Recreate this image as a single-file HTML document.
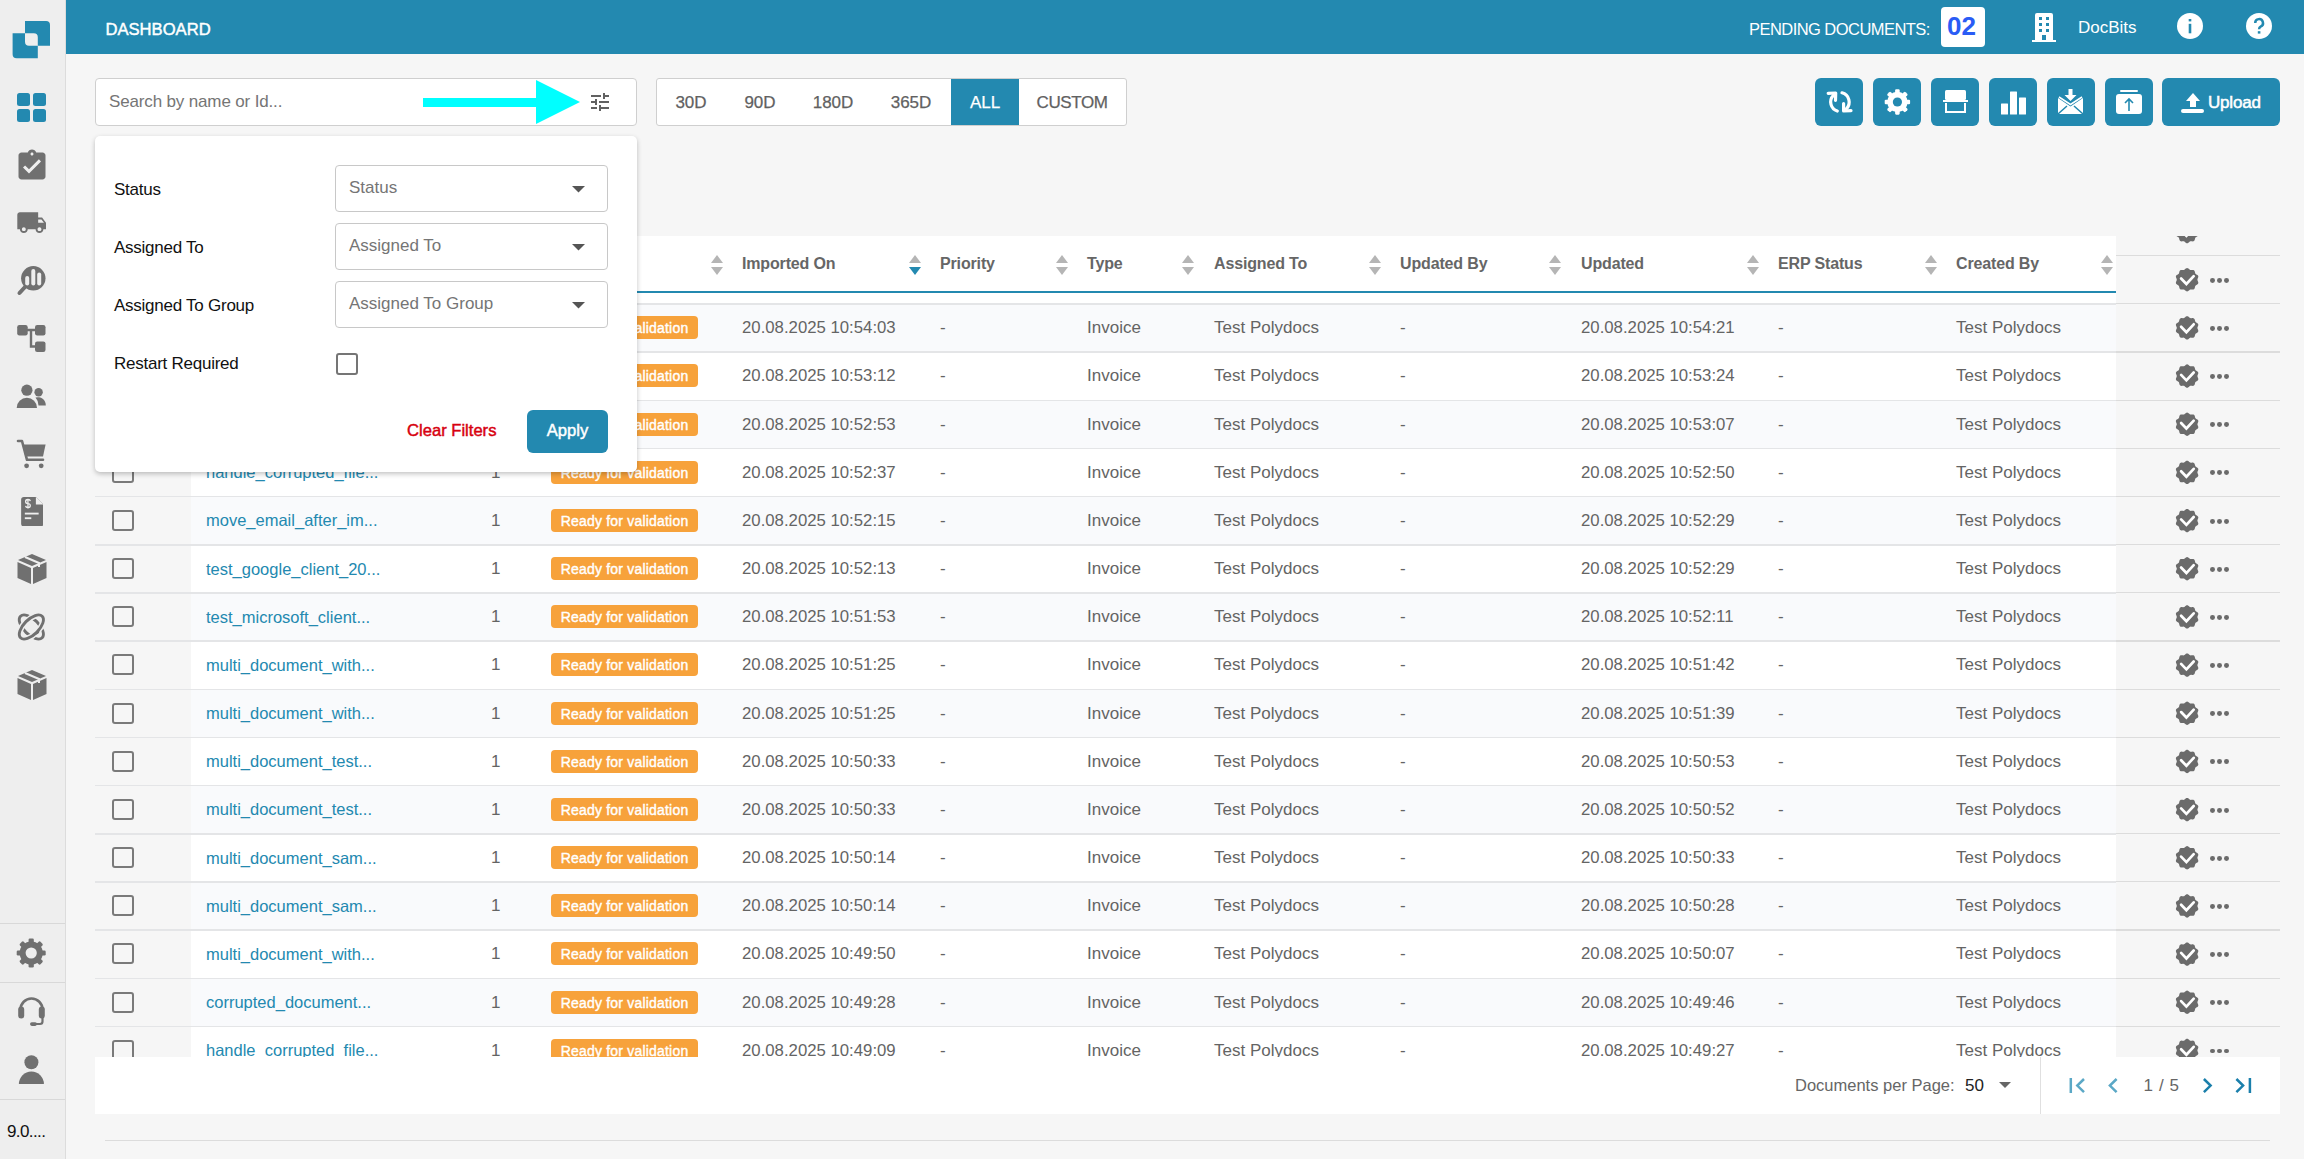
<!DOCTYPE html>
<html><head><meta charset="utf-8"><title>Dashboard</title>
<style>
*{box-sizing:border-box;margin:0;padding:0}
html,body{width:2304px;height:1159px;overflow:hidden;background:#f6f6f6;font-family:"Liberation Sans",sans-serif}
.a{position:absolute}
.t{position:absolute;white-space:nowrap}
</style></head><body>

<div class="a" style="left:0;top:0;width:66px;height:1159px;background:#eeeeee;border-right:1px solid #dcdcdc"></div>
<svg class="a" style="left:0;top:0;width:66px;height:66px" viewBox="0 0 66 66">
<path fill="#2389b0" d="M25 21 H46 a4 4 0 0 1 4 4 V45.8 H37.8 V37.3 a4 4 0 0 0 -4 -4 H25 Z"/>
<path fill="#2389b0" d="M12.6 33.3 H25 V41.8 a4 4 0 0 0 4 4 H37.8 V58.2 H16.6 a4 4 0 0 1 -4 -4 Z"/>
</svg>
<svg class="a" style="left:17px;top:93px;width:30px;height:30px" viewBox="0 0 30 30">
<rect x="0" y="0" width="13" height="13" rx="2.5" fill="#2389b0"/><rect x="16" y="0" width="13" height="13" rx="2.5" fill="#2389b0"/>
<rect x="0" y="16" width="13" height="13" rx="2.5" fill="#2389b0"/><rect x="16" y="16" width="13" height="13" rx="2.5" fill="#2389b0"/></svg>
<svg style="position:absolute;left:14px;top:148px;width:36px;height:36px" viewBox="0 0 24 24" ><path fill="#707070" d="M19 3h-4.18C14.4 1.84 13.3 1 12 1c-1.3 0-2.4.84-2.82 2H5c-1.1 0-2 .9-2 2v14c0 1.1.9 2 2 2h14c1.1 0 2-.9 2-2V5c0-1.1-.9-2-2-2zm-7 0c.55 0 1 .45 1 1s-.45 1-1 1-1-.45-1-1 .45-1 1-1zm-2 14l-4-4 1.41-1.41L10 14.17l6.59-6.59L18 9l-8 8z"/></svg>
<svg style="position:absolute;left:15.9px;top:206.8px;width:31.3px;height:31.3px" viewBox="0 0 24 24" ><path fill="#707070" d="M20 8h-3V4H3c-1.1 0-2 .9-2 2v11h2c0 1.66 1.34 3 3 3s3-1.34 3-3h6c0 1.66 1.34 3 3 3s3-1.34 3-3h2v-5l-3-4zM6 18.5c-.83 0-1.5-.67-1.5-1.5s.67-1.5 1.5-1.5 1.5.67 1.5 1.5-.67 1.5-1.5 1.5zm13.5-9l1.96 2.5H17V9.5h2.5zm-1.5 9c-.83 0-1.5-.67-1.5-1.5s.67-1.5 1.5-1.5 1.5.67 1.5 1.5-.67 1.5-1.5 1.5z"/></svg>
<svg class="a" style="left:0;top:250px;width:66px;height:60px" viewBox="0 250 66 60">
<circle cx="33.3" cy="278.3" r="12.2" fill="#707070"/>
<rect x="25.2" y="276" width="4" height="9.5" rx="2" fill="#eeeeee"/><rect x="31.3" y="269" width="4" height="16.5" rx="2" fill="#eeeeee"/><rect x="37.2" y="272.5" width="4" height="13" rx="2" fill="#eeeeee"/>
<path d="M25 287 L19.5 293" stroke="#707070" stroke-width="4" stroke-linecap="round"/></svg>
<svg class="a" style="left:0;top:310px;width:66px;height:50px" viewBox="0 310 66 50">
<rect x="17.2" y="325" width="10.5" height="10.5" rx="2.2" fill="#707070"/><rect x="35" y="325" width="10.5" height="10.5" rx="2.2" fill="#707070"/><rect x="35" y="341.4" width="10.5" height="10.5" rx="2.2" fill="#707070"/>
<path d="M27 330 H36 M31 330 V346.5 H36" stroke="#707070" stroke-width="2.4" fill="none"/></svg>
<svg class="a" style="left:0;top:370px;width:66px;height:50px" viewBox="0 370 66 50">
<circle cx="26.9" cy="390.2" r="5.6" fill="#707070"/><path d="M16.7 408 a10.15 10.15 0 0 1 20.3 0 Z" fill="#707070"/>
<circle cx="38.6" cy="392.3" r="4.2" fill="#707070"/><path d="M35.5 397.5 a8 8 0 0 1 10.3 7.9 H38.5 a12 12 0 0 0 -3 -7.9Z" fill="#707070"/></svg>
<svg class="a" style="left:0;top:430px;width:66px;height:45px" viewBox="0 430 66 45">
<path d="M18 441 H22 L27 459.8 H43" stroke="#707070" stroke-width="2.6" fill="none" stroke-linecap="round" stroke-linejoin="round"/>
<path d="M22.5 444.6 H45.6 L43 456.5 H25.4 Z" fill="#707070"/>
<circle cx="26.6" cy="465.8" r="2.4" fill="#707070"/><circle cx="41.2" cy="465.8" r="2.4" fill="#707070"/></svg>
<svg class="a" style="left:20.5px;top:496.7px;width:22.4px;height:29.5px" viewBox="0 0 24 32">
<path fill="#707070" d="M3 0 h13 l8 8 v21 a3 3 0 0 1 -3 3 h-18 a3 3 0 0 1 -3 -3 v-26 a3 3 0 0 1 3 -3z"/>
<path fill="#eeeeee" d="M16 0 v8 h8z"/>
<path d="M10 4.5 a2.6 2.2 0 1 0 -2.6 2.6 a2.6 2.2 0 1 1 -2.6 2.6 M7.4 2 V12.5" stroke="#eeeeee" stroke-width="1.4" fill="none"/>
<rect x="4" y="17" width="15" height="2" fill="#eeeeee"/><rect x="4" y="22" width="7" height="2" fill="#eeeeee"/></svg>
<svg class="a" style="left:16px;top:553px;width:32px;height:32px" viewBox="0 0 32 32">
<path fill="#707070" d="M16 1 L30 7 L16 13 L2 7 Z"/>
<path fill="#707070" d="M1.5 9 L15 15 V31 L1.5 25 Z"/>
<path fill="#707070" d="M30.5 9 L17 15 V31 L30.5 25 Z"/>
<path d="M9 4 L23 10 V14" stroke="#eeeeee" stroke-width="2" fill="none"/></svg>
<svg class="a" style="left:0;top:600px;width:66px;height:50px" viewBox="0 600 66 50">
<ellipse cx="31.35" cy="627" rx="15.3" ry="7.6" transform="rotate(45 31.35 627)" fill="none" stroke="#707070" stroke-width="2.9"/>
<ellipse cx="31.35" cy="627" rx="15.3" ry="7.6" transform="rotate(-45 31.35 627)" fill="none" stroke="#eeeeee" stroke-width="6"/>
<ellipse cx="31.35" cy="627" rx="15.3" ry="7.6" transform="rotate(-45 31.35 627)" fill="none" stroke="#707070" stroke-width="2.9"/>
<path d="M34 634 L38.5 629.5 a3 3 0 0 1 -2 5 Z" fill="#707070"/></svg>
<svg class="a" style="left:16px;top:669px;width:32px;height:32px" viewBox="0 0 32 32">
<path fill="#707070" d="M16 1 L30 7 L16 13 L2 7 Z"/>
<path fill="#707070" d="M1.5 9 L15 15 V31 L1.5 25 Z"/>
<path fill="#707070" d="M30.5 9 L17 15 V31 L30.5 25 Z"/>
<path d="M9 4 L23 10 V14" stroke="#eeeeee" stroke-width="2" fill="none"/></svg>
<div class="a" style="left:0;top:923px;width:65px;height:1px;background:#d8d8d8"></div>
<div class="a" style="left:0;top:982px;width:65px;height:1px;background:#d8d8d8"></div>
<div class="a" style="left:0;top:1099px;width:65px;height:1px;background:#d8d8d8"></div>
<svg class="a" style="left:0;top:0;width:2304px;height:1159px;overflow:visible;pointer-events:none"><circle cx="31.2" cy="953" r="11.60" fill="#707070"/><rect x="28.59" y="938.50" width="5.22" height="14.50" rx="1.30" fill="#707070" transform="rotate(0.0 31.2 953)"/><rect x="28.59" y="938.50" width="5.22" height="14.50" rx="1.30" fill="#707070" transform="rotate(45.0 31.2 953)"/><rect x="28.59" y="938.50" width="5.22" height="14.50" rx="1.30" fill="#707070" transform="rotate(90.0 31.2 953)"/><rect x="28.59" y="938.50" width="5.22" height="14.50" rx="1.30" fill="#707070" transform="rotate(135.0 31.2 953)"/><rect x="28.59" y="938.50" width="5.22" height="14.50" rx="1.30" fill="#707070" transform="rotate(180.0 31.2 953)"/><rect x="28.59" y="938.50" width="5.22" height="14.50" rx="1.30" fill="#707070" transform="rotate(225.0 31.2 953)"/><rect x="28.59" y="938.50" width="5.22" height="14.50" rx="1.30" fill="#707070" transform="rotate(270.0 31.2 953)"/><rect x="28.59" y="938.50" width="5.22" height="14.50" rx="1.30" fill="#707070" transform="rotate(315.0 31.2 953)"/><circle cx="31.2" cy="953" r="5.6" fill="#eeeeee"/></svg>
<svg class="a" style="left:0;top:990px;width:66px;height:45px" viewBox="0 990 66 45">
<path d="M20.5 1013 V1009.5 a11 11 0 0 1 22 0 V1013" stroke="#707070" stroke-width="2.6" fill="none"/>
<rect x="18.2" y="1006.5" width="6" height="12" rx="3" fill="#707070"/><rect x="38.8" y="1006.5" width="6" height="12" rx="3" fill="#707070"/>
<path d="M42.5 1017 V1021.5 a2.5 2.5 0 0 1 -2.5 2.5 H33" stroke="#707070" stroke-width="2.2" fill="none"/>
<rect x="30" y="1022.3" width="7" height="3.6" rx="1.8" fill="#707070"/></svg>
<svg class="a" style="left:0;top:1050px;width:66px;height:40px" viewBox="0 1050 66 40">
<circle cx="31.4" cy="1062.2" r="7" fill="#707070"/><path d="M18.9 1084 a12.5 12.5 0 0 1 25 0 Z" fill="#707070"/></svg>
<div class="t" style="left:7px;top:1122px;font-size:17px;color:#111;letter-spacing:-0.6px">9.0....</div>
<div class="a" style="left:66px;top:0;width:2238px;height:54px;background:#2389b0"></div>
<div class="t" style="left:105.5px;top:20px;font-size:16.6px;font-weight:400;color:#fff;-webkit-text-stroke:0.45px #fff;letter-spacing:0px">DASHBOARD</div>
<div class="t" style="left:1749px;top:20px;font-size:16.5px;color:#fff;letter-spacing:-0.55px">PENDING DOCUMENTS:</div>
<div class="a" style="left:1941px;top:7px;width:44px;height:40px;background:#fff;border-radius:4px"></div>
<div class="t" style="left:1947px;top:11px;font-size:26px;font-weight:700;color:#2a5cf5">02</div>
<svg class="a" style="left:2032px;top:13px;width:24px;height:29px" viewBox="0 0 24 29">
<path fill="#fff" d="M3 2 a2 2 0 0 1 2 -2 h14 a2 2 0 0 1 2 2 v25 h3 v2 h-24 v-2 h3z"/>
<g fill="#2389b0"><rect x="7" y="4" width="3" height="3"/><rect x="14" y="4" width="3" height="3"/>
<rect x="7" y="10" width="3" height="3"/><rect x="14" y="10" width="3" height="3"/>
<rect x="7" y="16" width="3" height="3"/><rect x="14" y="16" width="3" height="3"/>
<rect x="10" y="22" width="4" height="5"/></g></svg>
<div class="t" style="left:2078px;top:18px;font-size:17px;color:#fff">DocBits</div>
<svg class="a" style="left:2177px;top:12.6px;width:26px;height:26px" viewBox="0 0 26 26">
<circle cx="13" cy="13" r="13" fill="#fff"/><rect x="11.7" y="6" width="2.6" height="2.4" fill="#2389b0"/><rect x="11.7" y="10.8" width="2.6" height="9.5" fill="#2389b0"/></svg>
<svg class="a" style="left:2246px;top:12.6px;width:26px;height:26px" viewBox="0 0 26 26">
<circle cx="13" cy="13" r="13" fill="#fff"/>
<path d="M9.2 10 a3.9 3.9 0 1 1 5.4 3.6 c-1 .5 -1.5 1 -1.5 2.6" stroke="#2389b0" stroke-width="2.5" fill="none"/>
<rect x="11.8" y="18.2" width="2.6" height="2.4" fill="#2389b0"/></svg>
<div class="a" style="left:95px;top:78px;width:542px;height:48px;background:#fff;border:1px solid #cfcfcf;border-radius:4px"></div>
<div class="t" style="left:109px;top:92px;font-size:17px;color:#757575;letter-spacing:-0.15px">Search by name or Id...</div>
<svg class="a" style="left:420px;top:78px;width:165px;height:48px" viewBox="0 0 165 48">
<rect x="3" y="20" width="114" height="9" fill="#00ffff"/><path d="M116 2 L160 24 L116 46 Z" fill="#00ffff"/></svg>
<svg style="position:absolute;left:588px;top:90px;width:24px;height:24px" viewBox="0 0 24 24" ><path fill="#616161" d="M3 17v2h6v-2H3zM3 5v2h10V5H3zm10 16v-2h8v-2h-8v-2h-2v6h2zM7 9v2H3v2h4v2h2V9H7zm14 4v-2H11v2h10zm-6-4h2V7h4V5h-4V3h-2v6z"/></svg>
<div class="a" style="left:656px;top:78px;width:471px;height:48px;background:#fff;border:1px solid #cfcfcf;border-radius:3px"></div>
<div class="a" style="left:951px;top:79px;width:68px;height:46px;background:#2389b0"></div>
<div class="t" style="left:631px;width:120px;text-align:center;top:93px;font-size:17px;color:#616161;font-weight:400;-webkit-text-stroke:0.25px #616161;letter-spacing:0">30D</div>
<div class="t" style="left:700px;width:120px;text-align:center;top:93px;font-size:17px;color:#616161;font-weight:400;-webkit-text-stroke:0.25px #616161;letter-spacing:0">90D</div>
<div class="t" style="left:773px;width:120px;text-align:center;top:93px;font-size:17px;color:#616161;font-weight:400;-webkit-text-stroke:0.25px #616161;letter-spacing:0">180D</div>
<div class="t" style="left:851px;width:120px;text-align:center;top:93px;font-size:17px;color:#616161;font-weight:400;-webkit-text-stroke:0.25px #616161;letter-spacing:0">365D</div>
<div class="t" style="left:925px;width:120px;text-align:center;top:93px;font-size:17px;color:#fff;font-weight:400;-webkit-text-stroke:0.25px #fff;letter-spacing:0">ALL</div>
<div class="t" style="left:1012px;width:120px;text-align:center;top:93px;font-size:17px;color:#616161;font-weight:400;-webkit-text-stroke:0.25px #616161;letter-spacing:-0.4px">CUSTOM</div>
<div class="a" style="left:1815px;top:78px;width:48px;height:48px;background:#2389b0;border-radius:6px"></div>
<div class="a" style="left:1873px;top:78px;width:48px;height:48px;background:#2389b0;border-radius:6px"></div>
<div class="a" style="left:1931px;top:78px;width:48px;height:48px;background:#2389b0;border-radius:6px"></div>
<div class="a" style="left:1989px;top:78px;width:48px;height:48px;background:#2389b0;border-radius:6px"></div>
<div class="a" style="left:2047px;top:78px;width:48px;height:48px;background:#2389b0;border-radius:6px"></div>
<div class="a" style="left:2105px;top:78px;width:48px;height:48px;background:#2389b0;border-radius:6px"></div>
<div class="a" style="left:2162px;top:78px;width:118px;height:48px;background:#2389b0;border-radius:6px"></div>
<svg class="a" style="left:1820px;top:84px;width:40px;height:36px" viewBox="0 0 40 36">
<g stroke="#fff" stroke-width="3.2" fill="none" stroke-linecap="round" stroke-linejoin="round">
<path d="M13.2 11.5 A9.5 9.5 0 0 0 17.3 27"/><path d="M8.2 9.3 L15.7 9 L15.5 16.3"/>
<path d="M22 8.8 A9.5 9.5 0 0 1 26.3 24.8"/><path d="M23.6 19.6 L23.6 27 L31 26.6"/></g></svg>
<svg class="a" style="left:0;top:0;width:2304px;height:1159px;overflow:visible;pointer-events:none"><circle cx="1897.4" cy="102" r="10.16" fill="#fff"/><rect x="1895.11" y="89.30" width="4.57" height="12.70" rx="1.14" fill="#fff" transform="rotate(0.0 1897.4 102)"/><rect x="1895.11" y="89.30" width="4.57" height="12.70" rx="1.14" fill="#fff" transform="rotate(45.0 1897.4 102)"/><rect x="1895.11" y="89.30" width="4.57" height="12.70" rx="1.14" fill="#fff" transform="rotate(90.0 1897.4 102)"/><rect x="1895.11" y="89.30" width="4.57" height="12.70" rx="1.14" fill="#fff" transform="rotate(135.0 1897.4 102)"/><rect x="1895.11" y="89.30" width="4.57" height="12.70" rx="1.14" fill="#fff" transform="rotate(180.0 1897.4 102)"/><rect x="1895.11" y="89.30" width="4.57" height="12.70" rx="1.14" fill="#fff" transform="rotate(225.0 1897.4 102)"/><rect x="1895.11" y="89.30" width="4.57" height="12.70" rx="1.14" fill="#fff" transform="rotate(270.0 1897.4 102)"/><rect x="1895.11" y="89.30" width="4.57" height="12.70" rx="1.14" fill="#fff" transform="rotate(315.0 1897.4 102)"/><circle cx="1897.4" cy="102" r="4.6" fill="#2389b0"/></svg>
<svg class="a" style="left:1943px;top:89px;width:25px;height:24px" viewBox="0 0 25 24">
<rect x="2" y="1" width="21" height="10" rx="1.5" fill="#fff"/><rect x="0" y="11" width="25" height="2" fill="#fff"/>
<path d="M3 14 v9 h19 v-9" stroke="#fff" stroke-width="2" fill="none"/></svg>
<svg class="a" style="left:2000.5px;top:89.5px;width:25px;height:25px" viewBox="0 0 25 24">
<rect x="0" y="13" width="7" height="11" rx="0.5" fill="#fff"/><rect x="9" y="1" width="7" height="23" rx="0.5" fill="#fff"/><rect x="18" y="7" width="7" height="17" rx="0.5" fill="#fff"/></svg>
<svg class="a" style="left:2058px;top:89px;width:25px;height:26px" viewBox="0 0 25 26">
<path fill="#fff" d="M10.5 0 h4 v6 h4 l-6 6 l-6 -6 h4z"/>
<path fill="#fff" d="M0 9 l12.5 8.5 l12.5 -8.5 v16 h-25z"/>
<path d="M0 25 l9 -8 M25 25 l-9 -8" stroke="#2389b0" stroke-width="1.5"/>
<path d="M1 8 l11.5 7.5 l11.5 -7.5" stroke="#fff" stroke-width="1.5" fill="none"/></svg>
<svg class="a" style="left:2116px;top:90px;width:26px;height:24px" viewBox="0 0 26 24">
<rect x="4" y="0" width="18" height="2" rx="1" fill="#fff"/><rect x="0" y="4" width="26" height="20" rx="3" fill="#fff"/>
<path d="M13 21 v-12 M9 13 l4 -4 l4 4" stroke="#2389b0" stroke-width="1.6" fill="none"/></svg>
<svg class="a" style="left:2181px;top:93px;width:24px;height:20px" viewBox="0 0 24 20">
<path fill="#fff" d="M12 0 l7 8 h-4 v6 h-6 v-6 h-4z"/><rect x="0" y="16" width="23" height="4" rx="2" fill="#fff"/></svg>
<div class="t" style="left:2208px;top:93px;font-size:17px;font-weight:400;color:#fff;-webkit-text-stroke:0.5px #fff;letter-spacing:-0.2px">Upload</div>
<div class="a" style="left:95px;top:236px;width:2021px;height:55px;background:#fff"></div>
<div class="a" style="left:95px;top:291px;width:2021px;height:2.5px;background:#2389b0"></div>
<div class="a" style="left:95px;top:293px;width:2021px;height:10px;background:#fff"></div>
<div class="t" style="left:742px;top:255px;font-size:16px;font-weight:700;color:#666;letter-spacing:-0.15px">Imported On</div>
<div class="t" style="left:940px;top:255px;font-size:16px;font-weight:700;color:#666;letter-spacing:-0.15px">Priority</div>
<div class="t" style="left:1087px;top:255px;font-size:16px;font-weight:700;color:#666;letter-spacing:-0.15px">Type</div>
<div class="t" style="left:1214px;top:255px;font-size:16px;font-weight:700;color:#666;letter-spacing:-0.15px">Assigned To</div>
<div class="t" style="left:1400px;top:255px;font-size:16px;font-weight:700;color:#666;letter-spacing:-0.15px">Updated By</div>
<div class="t" style="left:1581px;top:255px;font-size:16px;font-weight:700;color:#666;letter-spacing:-0.15px">Updated</div>
<div class="t" style="left:1778px;top:255px;font-size:16px;font-weight:700;color:#666;letter-spacing:-0.15px">ERP Status</div>
<div class="t" style="left:1956px;top:255px;font-size:16px;font-weight:700;color:#666;letter-spacing:-0.15px">Created By</div>
<svg class="a" style="left:711px;top:255px;width:12px;height:21px" viewBox="0 0 12 21">
<path d="M6 0 L12 8 H0Z" fill="#b5b5b5"/><path d="M0 12 H12 L6 20Z" fill="#b5b5b5"/></svg>
<svg class="a" style="left:1056px;top:255px;width:12px;height:21px" viewBox="0 0 12 21">
<path d="M6 0 L12 8 H0Z" fill="#b5b5b5"/><path d="M0 12 H12 L6 20Z" fill="#b5b5b5"/></svg>
<svg class="a" style="left:1182px;top:255px;width:12px;height:21px" viewBox="0 0 12 21">
<path d="M6 0 L12 8 H0Z" fill="#b5b5b5"/><path d="M0 12 H12 L6 20Z" fill="#b5b5b5"/></svg>
<svg class="a" style="left:1369px;top:255px;width:12px;height:21px" viewBox="0 0 12 21">
<path d="M6 0 L12 8 H0Z" fill="#b5b5b5"/><path d="M0 12 H12 L6 20Z" fill="#b5b5b5"/></svg>
<svg class="a" style="left:1549px;top:255px;width:12px;height:21px" viewBox="0 0 12 21">
<path d="M6 0 L12 8 H0Z" fill="#b5b5b5"/><path d="M0 12 H12 L6 20Z" fill="#b5b5b5"/></svg>
<svg class="a" style="left:1747px;top:255px;width:12px;height:21px" viewBox="0 0 12 21">
<path d="M6 0 L12 8 H0Z" fill="#b5b5b5"/><path d="M0 12 H12 L6 20Z" fill="#b5b5b5"/></svg>
<svg class="a" style="left:1925px;top:255px;width:12px;height:21px" viewBox="0 0 12 21">
<path d="M6 0 L12 8 H0Z" fill="#b5b5b5"/><path d="M0 12 H12 L6 20Z" fill="#b5b5b5"/></svg>
<svg class="a" style="left:2101px;top:255px;width:12px;height:21px" viewBox="0 0 12 21">
<path d="M6 0 L12 8 H0Z" fill="#b5b5b5"/><path d="M0 12 H12 L6 20Z" fill="#b5b5b5"/></svg>
<svg class="a" style="left:909px;top:255px;width:12px;height:21px" viewBox="0 0 12 21">
<path d="M6 0 L12 8 H0Z" fill="#b5b5b5"/><path d="M0 12 H12 L6 20Z" fill="#2389b0"/></svg>
<div class="a" style="left:95px;top:303.2px;width:2021px;height:48.17px;background:#f9fafc;overflow:hidden">
<div class="a" style="left:0;top:0;width:2021px;height:1.5px;background:#e4e5e7"></div>
<div class="a" style="left:0;top:1.5px;width:96px;height:47px;background:#f6f6f6"></div>
<div class="a" style="left:17px;top:207px;"></div>
<div class="a" style="left:17px;top:14px;width:21.5px;height:21px;border:2px solid #7a7a7a;border-radius:3px;background:transparent"></div>
<div class="t" style="left:111px;top:15.5px;font-size:16.5px;color:#2389b0">document_one...</div>
<div class="t" style="left:396px;top:15px;font-size:17px;color:#646464">1</div>
<div class="a" style="left:456px;top:13px;width:147px;height:23px;background:#f7a23b;border-radius:4px"></div>
<div class="t" style="left:456px;width:147px;text-align:center;top:17px;font-size:14px;font-weight:400;color:#fff;-webkit-text-stroke:0.4px #fff;letter-spacing:0.2px">Ready for validation</div>
<div class="t" style="left:647px;top:15px;font-size:16.75px;color:#646464">20.08.2025 10:54:03</div>
<div class="t" style="left:845px;top:15px;font-size:17px;color:#646464">-</div>
<div class="t" style="left:992px;top:15px;font-size:17px;color:#646464">Invoice</div>
<div class="t" style="left:1119px;top:15px;font-size:17px;color:#646464">Test Polydocs</div>
<div class="t" style="left:1305px;top:15px;font-size:17px;color:#646464">-</div>
<div class="t" style="left:1486px;top:15px;font-size:16.75px;color:#646464">20.08.2025 10:54:21</div>
<div class="t" style="left:1683px;top:15px;font-size:17px;color:#646464">-</div>
<div class="t" style="left:1861px;top:15px;font-size:17px;color:#646464">Test Polydocs</div>
</div>
<div class="a" style="left:95px;top:351.37px;width:2021px;height:48.17px;background:#ffffff;overflow:hidden">
<div class="a" style="left:0;top:0;width:2021px;height:1.5px;background:#e4e5e7"></div>
<div class="a" style="left:0;top:1.5px;width:96px;height:47px;background:#f6f6f6"></div>
<div class="a" style="left:17px;top:207px;"></div>
<div class="a" style="left:17px;top:14px;width:21.5px;height:21px;border:2px solid #7a7a7a;border-radius:3px;background:transparent"></div>
<div class="t" style="left:111px;top:15.5px;font-size:16.5px;color:#2389b0">document_two...</div>
<div class="t" style="left:396px;top:15px;font-size:17px;color:#646464">1</div>
<div class="a" style="left:456px;top:13px;width:147px;height:23px;background:#f7a23b;border-radius:4px"></div>
<div class="t" style="left:456px;width:147px;text-align:center;top:17px;font-size:14px;font-weight:400;color:#fff;-webkit-text-stroke:0.4px #fff;letter-spacing:0.2px">Ready for validation</div>
<div class="t" style="left:647px;top:15px;font-size:16.75px;color:#646464">20.08.2025 10:53:12</div>
<div class="t" style="left:845px;top:15px;font-size:17px;color:#646464">-</div>
<div class="t" style="left:992px;top:15px;font-size:17px;color:#646464">Invoice</div>
<div class="t" style="left:1119px;top:15px;font-size:17px;color:#646464">Test Polydocs</div>
<div class="t" style="left:1305px;top:15px;font-size:17px;color:#646464">-</div>
<div class="t" style="left:1486px;top:15px;font-size:16.75px;color:#646464">20.08.2025 10:53:24</div>
<div class="t" style="left:1683px;top:15px;font-size:17px;color:#646464">-</div>
<div class="t" style="left:1861px;top:15px;font-size:17px;color:#646464">Test Polydocs</div>
</div>
<div class="a" style="left:95px;top:399.54px;width:2021px;height:48.17px;background:#f9fafc;overflow:hidden">
<div class="a" style="left:0;top:0;width:2021px;height:1.5px;background:#e4e5e7"></div>
<div class="a" style="left:0;top:1.5px;width:96px;height:47px;background:#f6f6f6"></div>
<div class="a" style="left:17px;top:207px;"></div>
<div class="a" style="left:17px;top:14px;width:21.5px;height:21px;border:2px solid #7a7a7a;border-radius:3px;background:transparent"></div>
<div class="t" style="left:111px;top:15.5px;font-size:16.5px;color:#2389b0">document_three...</div>
<div class="t" style="left:396px;top:15px;font-size:17px;color:#646464">1</div>
<div class="a" style="left:456px;top:13px;width:147px;height:23px;background:#f7a23b;border-radius:4px"></div>
<div class="t" style="left:456px;width:147px;text-align:center;top:17px;font-size:14px;font-weight:400;color:#fff;-webkit-text-stroke:0.4px #fff;letter-spacing:0.2px">Ready for validation</div>
<div class="t" style="left:647px;top:15px;font-size:16.75px;color:#646464">20.08.2025 10:52:53</div>
<div class="t" style="left:845px;top:15px;font-size:17px;color:#646464">-</div>
<div class="t" style="left:992px;top:15px;font-size:17px;color:#646464">Invoice</div>
<div class="t" style="left:1119px;top:15px;font-size:17px;color:#646464">Test Polydocs</div>
<div class="t" style="left:1305px;top:15px;font-size:17px;color:#646464">-</div>
<div class="t" style="left:1486px;top:15px;font-size:16.75px;color:#646464">20.08.2025 10:53:07</div>
<div class="t" style="left:1683px;top:15px;font-size:17px;color:#646464">-</div>
<div class="t" style="left:1861px;top:15px;font-size:17px;color:#646464">Test Polydocs</div>
</div>
<div class="a" style="left:95px;top:447.71px;width:2021px;height:48.17px;background:#ffffff;overflow:hidden">
<div class="a" style="left:0;top:0;width:2021px;height:1.5px;background:#e4e5e7"></div>
<div class="a" style="left:0;top:1.5px;width:96px;height:47px;background:#f6f6f6"></div>
<div class="a" style="left:17px;top:207px;"></div>
<div class="a" style="left:17px;top:14px;width:21.5px;height:21px;border:2px solid #7a7a7a;border-radius:3px;background:transparent"></div>
<div class="t" style="left:111px;top:15.5px;font-size:16.5px;color:#2389b0">handle_corrupted_file...</div>
<div class="t" style="left:396px;top:15px;font-size:17px;color:#646464">1</div>
<div class="a" style="left:456px;top:13px;width:147px;height:23px;background:#f7a23b;border-radius:4px"></div>
<div class="t" style="left:456px;width:147px;text-align:center;top:17px;font-size:14px;font-weight:400;color:#fff;-webkit-text-stroke:0.4px #fff;letter-spacing:0.2px">Ready for validation</div>
<div class="t" style="left:647px;top:15px;font-size:16.75px;color:#646464">20.08.2025 10:52:37</div>
<div class="t" style="left:845px;top:15px;font-size:17px;color:#646464">-</div>
<div class="t" style="left:992px;top:15px;font-size:17px;color:#646464">Invoice</div>
<div class="t" style="left:1119px;top:15px;font-size:17px;color:#646464">Test Polydocs</div>
<div class="t" style="left:1305px;top:15px;font-size:17px;color:#646464">-</div>
<div class="t" style="left:1486px;top:15px;font-size:16.75px;color:#646464">20.08.2025 10:52:50</div>
<div class="t" style="left:1683px;top:15px;font-size:17px;color:#646464">-</div>
<div class="t" style="left:1861px;top:15px;font-size:17px;color:#646464">Test Polydocs</div>
</div>
<div class="a" style="left:95px;top:495.88px;width:2021px;height:48.17px;background:#f9fafc;overflow:hidden">
<div class="a" style="left:0;top:0;width:2021px;height:1.5px;background:#e4e5e7"></div>
<div class="a" style="left:0;top:1.5px;width:96px;height:47px;background:#f6f6f6"></div>
<div class="a" style="left:17px;top:207px;"></div>
<div class="a" style="left:17px;top:14px;width:21.5px;height:21px;border:2px solid #7a7a7a;border-radius:3px;background:transparent"></div>
<div class="t" style="left:111px;top:15.5px;font-size:16.5px;color:#2389b0">move_email_after_im...</div>
<div class="t" style="left:396px;top:15px;font-size:17px;color:#646464">1</div>
<div class="a" style="left:456px;top:13px;width:147px;height:23px;background:#f7a23b;border-radius:4px"></div>
<div class="t" style="left:456px;width:147px;text-align:center;top:17px;font-size:14px;font-weight:400;color:#fff;-webkit-text-stroke:0.4px #fff;letter-spacing:0.2px">Ready for validation</div>
<div class="t" style="left:647px;top:15px;font-size:16.75px;color:#646464">20.08.2025 10:52:15</div>
<div class="t" style="left:845px;top:15px;font-size:17px;color:#646464">-</div>
<div class="t" style="left:992px;top:15px;font-size:17px;color:#646464">Invoice</div>
<div class="t" style="left:1119px;top:15px;font-size:17px;color:#646464">Test Polydocs</div>
<div class="t" style="left:1305px;top:15px;font-size:17px;color:#646464">-</div>
<div class="t" style="left:1486px;top:15px;font-size:16.75px;color:#646464">20.08.2025 10:52:29</div>
<div class="t" style="left:1683px;top:15px;font-size:17px;color:#646464">-</div>
<div class="t" style="left:1861px;top:15px;font-size:17px;color:#646464">Test Polydocs</div>
</div>
<div class="a" style="left:95px;top:544.05px;width:2021px;height:48.17px;background:#ffffff;overflow:hidden">
<div class="a" style="left:0;top:0;width:2021px;height:1.5px;background:#e4e5e7"></div>
<div class="a" style="left:0;top:1.5px;width:96px;height:47px;background:#f6f6f6"></div>
<div class="a" style="left:17px;top:207px;"></div>
<div class="a" style="left:17px;top:14px;width:21.5px;height:21px;border:2px solid #7a7a7a;border-radius:3px;background:transparent"></div>
<div class="t" style="left:111px;top:15.5px;font-size:16.5px;color:#2389b0">test_google_client_20...</div>
<div class="t" style="left:396px;top:15px;font-size:17px;color:#646464">1</div>
<div class="a" style="left:456px;top:13px;width:147px;height:23px;background:#f7a23b;border-radius:4px"></div>
<div class="t" style="left:456px;width:147px;text-align:center;top:17px;font-size:14px;font-weight:400;color:#fff;-webkit-text-stroke:0.4px #fff;letter-spacing:0.2px">Ready for validation</div>
<div class="t" style="left:647px;top:15px;font-size:16.75px;color:#646464">20.08.2025 10:52:13</div>
<div class="t" style="left:845px;top:15px;font-size:17px;color:#646464">-</div>
<div class="t" style="left:992px;top:15px;font-size:17px;color:#646464">Invoice</div>
<div class="t" style="left:1119px;top:15px;font-size:17px;color:#646464">Test Polydocs</div>
<div class="t" style="left:1305px;top:15px;font-size:17px;color:#646464">-</div>
<div class="t" style="left:1486px;top:15px;font-size:16.75px;color:#646464">20.08.2025 10:52:29</div>
<div class="t" style="left:1683px;top:15px;font-size:17px;color:#646464">-</div>
<div class="t" style="left:1861px;top:15px;font-size:17px;color:#646464">Test Polydocs</div>
</div>
<div class="a" style="left:95px;top:592.22px;width:2021px;height:48.17px;background:#f9fafc;overflow:hidden">
<div class="a" style="left:0;top:0;width:2021px;height:1.5px;background:#e4e5e7"></div>
<div class="a" style="left:0;top:1.5px;width:96px;height:47px;background:#f6f6f6"></div>
<div class="a" style="left:17px;top:207px;"></div>
<div class="a" style="left:17px;top:14px;width:21.5px;height:21px;border:2px solid #7a7a7a;border-radius:3px;background:transparent"></div>
<div class="t" style="left:111px;top:15.5px;font-size:16.5px;color:#2389b0">test_microsoft_client...</div>
<div class="t" style="left:396px;top:15px;font-size:17px;color:#646464">1</div>
<div class="a" style="left:456px;top:13px;width:147px;height:23px;background:#f7a23b;border-radius:4px"></div>
<div class="t" style="left:456px;width:147px;text-align:center;top:17px;font-size:14px;font-weight:400;color:#fff;-webkit-text-stroke:0.4px #fff;letter-spacing:0.2px">Ready for validation</div>
<div class="t" style="left:647px;top:15px;font-size:16.75px;color:#646464">20.08.2025 10:51:53</div>
<div class="t" style="left:845px;top:15px;font-size:17px;color:#646464">-</div>
<div class="t" style="left:992px;top:15px;font-size:17px;color:#646464">Invoice</div>
<div class="t" style="left:1119px;top:15px;font-size:17px;color:#646464">Test Polydocs</div>
<div class="t" style="left:1305px;top:15px;font-size:17px;color:#646464">-</div>
<div class="t" style="left:1486px;top:15px;font-size:16.75px;color:#646464">20.08.2025 10:52:11</div>
<div class="t" style="left:1683px;top:15px;font-size:17px;color:#646464">-</div>
<div class="t" style="left:1861px;top:15px;font-size:17px;color:#646464">Test Polydocs</div>
</div>
<div class="a" style="left:95px;top:640.39px;width:2021px;height:48.17px;background:#ffffff;overflow:hidden">
<div class="a" style="left:0;top:0;width:2021px;height:1.5px;background:#e4e5e7"></div>
<div class="a" style="left:0;top:1.5px;width:96px;height:47px;background:#f6f6f6"></div>
<div class="a" style="left:17px;top:207px;"></div>
<div class="a" style="left:17px;top:14px;width:21.5px;height:21px;border:2px solid #7a7a7a;border-radius:3px;background:transparent"></div>
<div class="t" style="left:111px;top:15.5px;font-size:16.5px;color:#2389b0">multi_document_with...</div>
<div class="t" style="left:396px;top:15px;font-size:17px;color:#646464">1</div>
<div class="a" style="left:456px;top:13px;width:147px;height:23px;background:#f7a23b;border-radius:4px"></div>
<div class="t" style="left:456px;width:147px;text-align:center;top:17px;font-size:14px;font-weight:400;color:#fff;-webkit-text-stroke:0.4px #fff;letter-spacing:0.2px">Ready for validation</div>
<div class="t" style="left:647px;top:15px;font-size:16.75px;color:#646464">20.08.2025 10:51:25</div>
<div class="t" style="left:845px;top:15px;font-size:17px;color:#646464">-</div>
<div class="t" style="left:992px;top:15px;font-size:17px;color:#646464">Invoice</div>
<div class="t" style="left:1119px;top:15px;font-size:17px;color:#646464">Test Polydocs</div>
<div class="t" style="left:1305px;top:15px;font-size:17px;color:#646464">-</div>
<div class="t" style="left:1486px;top:15px;font-size:16.75px;color:#646464">20.08.2025 10:51:42</div>
<div class="t" style="left:1683px;top:15px;font-size:17px;color:#646464">-</div>
<div class="t" style="left:1861px;top:15px;font-size:17px;color:#646464">Test Polydocs</div>
</div>
<div class="a" style="left:95px;top:688.56px;width:2021px;height:48.17px;background:#f9fafc;overflow:hidden">
<div class="a" style="left:0;top:0;width:2021px;height:1.5px;background:#e4e5e7"></div>
<div class="a" style="left:0;top:1.5px;width:96px;height:47px;background:#f6f6f6"></div>
<div class="a" style="left:17px;top:207px;"></div>
<div class="a" style="left:17px;top:14px;width:21.5px;height:21px;border:2px solid #7a7a7a;border-radius:3px;background:transparent"></div>
<div class="t" style="left:111px;top:15.5px;font-size:16.5px;color:#2389b0">multi_document_with...</div>
<div class="t" style="left:396px;top:15px;font-size:17px;color:#646464">1</div>
<div class="a" style="left:456px;top:13px;width:147px;height:23px;background:#f7a23b;border-radius:4px"></div>
<div class="t" style="left:456px;width:147px;text-align:center;top:17px;font-size:14px;font-weight:400;color:#fff;-webkit-text-stroke:0.4px #fff;letter-spacing:0.2px">Ready for validation</div>
<div class="t" style="left:647px;top:15px;font-size:16.75px;color:#646464">20.08.2025 10:51:25</div>
<div class="t" style="left:845px;top:15px;font-size:17px;color:#646464">-</div>
<div class="t" style="left:992px;top:15px;font-size:17px;color:#646464">Invoice</div>
<div class="t" style="left:1119px;top:15px;font-size:17px;color:#646464">Test Polydocs</div>
<div class="t" style="left:1305px;top:15px;font-size:17px;color:#646464">-</div>
<div class="t" style="left:1486px;top:15px;font-size:16.75px;color:#646464">20.08.2025 10:51:39</div>
<div class="t" style="left:1683px;top:15px;font-size:17px;color:#646464">-</div>
<div class="t" style="left:1861px;top:15px;font-size:17px;color:#646464">Test Polydocs</div>
</div>
<div class="a" style="left:95px;top:736.73px;width:2021px;height:48.17px;background:#ffffff;overflow:hidden">
<div class="a" style="left:0;top:0;width:2021px;height:1.5px;background:#e4e5e7"></div>
<div class="a" style="left:0;top:1.5px;width:96px;height:47px;background:#f6f6f6"></div>
<div class="a" style="left:17px;top:207px;"></div>
<div class="a" style="left:17px;top:14px;width:21.5px;height:21px;border:2px solid #7a7a7a;border-radius:3px;background:transparent"></div>
<div class="t" style="left:111px;top:15.5px;font-size:16.5px;color:#2389b0">multi_document_test...</div>
<div class="t" style="left:396px;top:15px;font-size:17px;color:#646464">1</div>
<div class="a" style="left:456px;top:13px;width:147px;height:23px;background:#f7a23b;border-radius:4px"></div>
<div class="t" style="left:456px;width:147px;text-align:center;top:17px;font-size:14px;font-weight:400;color:#fff;-webkit-text-stroke:0.4px #fff;letter-spacing:0.2px">Ready for validation</div>
<div class="t" style="left:647px;top:15px;font-size:16.75px;color:#646464">20.08.2025 10:50:33</div>
<div class="t" style="left:845px;top:15px;font-size:17px;color:#646464">-</div>
<div class="t" style="left:992px;top:15px;font-size:17px;color:#646464">Invoice</div>
<div class="t" style="left:1119px;top:15px;font-size:17px;color:#646464">Test Polydocs</div>
<div class="t" style="left:1305px;top:15px;font-size:17px;color:#646464">-</div>
<div class="t" style="left:1486px;top:15px;font-size:16.75px;color:#646464">20.08.2025 10:50:53</div>
<div class="t" style="left:1683px;top:15px;font-size:17px;color:#646464">-</div>
<div class="t" style="left:1861px;top:15px;font-size:17px;color:#646464">Test Polydocs</div>
</div>
<div class="a" style="left:95px;top:784.9px;width:2021px;height:48.17px;background:#f9fafc;overflow:hidden">
<div class="a" style="left:0;top:0;width:2021px;height:1.5px;background:#e4e5e7"></div>
<div class="a" style="left:0;top:1.5px;width:96px;height:47px;background:#f6f6f6"></div>
<div class="a" style="left:17px;top:207px;"></div>
<div class="a" style="left:17px;top:14px;width:21.5px;height:21px;border:2px solid #7a7a7a;border-radius:3px;background:transparent"></div>
<div class="t" style="left:111px;top:15.5px;font-size:16.5px;color:#2389b0">multi_document_test...</div>
<div class="t" style="left:396px;top:15px;font-size:17px;color:#646464">1</div>
<div class="a" style="left:456px;top:13px;width:147px;height:23px;background:#f7a23b;border-radius:4px"></div>
<div class="t" style="left:456px;width:147px;text-align:center;top:17px;font-size:14px;font-weight:400;color:#fff;-webkit-text-stroke:0.4px #fff;letter-spacing:0.2px">Ready for validation</div>
<div class="t" style="left:647px;top:15px;font-size:16.75px;color:#646464">20.08.2025 10:50:33</div>
<div class="t" style="left:845px;top:15px;font-size:17px;color:#646464">-</div>
<div class="t" style="left:992px;top:15px;font-size:17px;color:#646464">Invoice</div>
<div class="t" style="left:1119px;top:15px;font-size:17px;color:#646464">Test Polydocs</div>
<div class="t" style="left:1305px;top:15px;font-size:17px;color:#646464">-</div>
<div class="t" style="left:1486px;top:15px;font-size:16.75px;color:#646464">20.08.2025 10:50:52</div>
<div class="t" style="left:1683px;top:15px;font-size:17px;color:#646464">-</div>
<div class="t" style="left:1861px;top:15px;font-size:17px;color:#646464">Test Polydocs</div>
</div>
<div class="a" style="left:95px;top:833.07px;width:2021px;height:48.17px;background:#ffffff;overflow:hidden">
<div class="a" style="left:0;top:0;width:2021px;height:1.5px;background:#e4e5e7"></div>
<div class="a" style="left:0;top:1.5px;width:96px;height:47px;background:#f6f6f6"></div>
<div class="a" style="left:17px;top:207px;"></div>
<div class="a" style="left:17px;top:14px;width:21.5px;height:21px;border:2px solid #7a7a7a;border-radius:3px;background:transparent"></div>
<div class="t" style="left:111px;top:15.5px;font-size:16.5px;color:#2389b0">multi_document_sam...</div>
<div class="t" style="left:396px;top:15px;font-size:17px;color:#646464">1</div>
<div class="a" style="left:456px;top:13px;width:147px;height:23px;background:#f7a23b;border-radius:4px"></div>
<div class="t" style="left:456px;width:147px;text-align:center;top:17px;font-size:14px;font-weight:400;color:#fff;-webkit-text-stroke:0.4px #fff;letter-spacing:0.2px">Ready for validation</div>
<div class="t" style="left:647px;top:15px;font-size:16.75px;color:#646464">20.08.2025 10:50:14</div>
<div class="t" style="left:845px;top:15px;font-size:17px;color:#646464">-</div>
<div class="t" style="left:992px;top:15px;font-size:17px;color:#646464">Invoice</div>
<div class="t" style="left:1119px;top:15px;font-size:17px;color:#646464">Test Polydocs</div>
<div class="t" style="left:1305px;top:15px;font-size:17px;color:#646464">-</div>
<div class="t" style="left:1486px;top:15px;font-size:16.75px;color:#646464">20.08.2025 10:50:33</div>
<div class="t" style="left:1683px;top:15px;font-size:17px;color:#646464">-</div>
<div class="t" style="left:1861px;top:15px;font-size:17px;color:#646464">Test Polydocs</div>
</div>
<div class="a" style="left:95px;top:881.24px;width:2021px;height:48.17px;background:#f9fafc;overflow:hidden">
<div class="a" style="left:0;top:0;width:2021px;height:1.5px;background:#e4e5e7"></div>
<div class="a" style="left:0;top:1.5px;width:96px;height:47px;background:#f6f6f6"></div>
<div class="a" style="left:17px;top:207px;"></div>
<div class="a" style="left:17px;top:14px;width:21.5px;height:21px;border:2px solid #7a7a7a;border-radius:3px;background:transparent"></div>
<div class="t" style="left:111px;top:15.5px;font-size:16.5px;color:#2389b0">multi_document_sam...</div>
<div class="t" style="left:396px;top:15px;font-size:17px;color:#646464">1</div>
<div class="a" style="left:456px;top:13px;width:147px;height:23px;background:#f7a23b;border-radius:4px"></div>
<div class="t" style="left:456px;width:147px;text-align:center;top:17px;font-size:14px;font-weight:400;color:#fff;-webkit-text-stroke:0.4px #fff;letter-spacing:0.2px">Ready for validation</div>
<div class="t" style="left:647px;top:15px;font-size:16.75px;color:#646464">20.08.2025 10:50:14</div>
<div class="t" style="left:845px;top:15px;font-size:17px;color:#646464">-</div>
<div class="t" style="left:992px;top:15px;font-size:17px;color:#646464">Invoice</div>
<div class="t" style="left:1119px;top:15px;font-size:17px;color:#646464">Test Polydocs</div>
<div class="t" style="left:1305px;top:15px;font-size:17px;color:#646464">-</div>
<div class="t" style="left:1486px;top:15px;font-size:16.75px;color:#646464">20.08.2025 10:50:28</div>
<div class="t" style="left:1683px;top:15px;font-size:17px;color:#646464">-</div>
<div class="t" style="left:1861px;top:15px;font-size:17px;color:#646464">Test Polydocs</div>
</div>
<div class="a" style="left:95px;top:929.41px;width:2021px;height:48.17px;background:#ffffff;overflow:hidden">
<div class="a" style="left:0;top:0;width:2021px;height:1.5px;background:#e4e5e7"></div>
<div class="a" style="left:0;top:1.5px;width:96px;height:47px;background:#f6f6f6"></div>
<div class="a" style="left:17px;top:207px;"></div>
<div class="a" style="left:17px;top:14px;width:21.5px;height:21px;border:2px solid #7a7a7a;border-radius:3px;background:transparent"></div>
<div class="t" style="left:111px;top:15.5px;font-size:16.5px;color:#2389b0">multi_document_with...</div>
<div class="t" style="left:396px;top:15px;font-size:17px;color:#646464">1</div>
<div class="a" style="left:456px;top:13px;width:147px;height:23px;background:#f7a23b;border-radius:4px"></div>
<div class="t" style="left:456px;width:147px;text-align:center;top:17px;font-size:14px;font-weight:400;color:#fff;-webkit-text-stroke:0.4px #fff;letter-spacing:0.2px">Ready for validation</div>
<div class="t" style="left:647px;top:15px;font-size:16.75px;color:#646464">20.08.2025 10:49:50</div>
<div class="t" style="left:845px;top:15px;font-size:17px;color:#646464">-</div>
<div class="t" style="left:992px;top:15px;font-size:17px;color:#646464">Invoice</div>
<div class="t" style="left:1119px;top:15px;font-size:17px;color:#646464">Test Polydocs</div>
<div class="t" style="left:1305px;top:15px;font-size:17px;color:#646464">-</div>
<div class="t" style="left:1486px;top:15px;font-size:16.75px;color:#646464">20.08.2025 10:50:07</div>
<div class="t" style="left:1683px;top:15px;font-size:17px;color:#646464">-</div>
<div class="t" style="left:1861px;top:15px;font-size:17px;color:#646464">Test Polydocs</div>
</div>
<div class="a" style="left:95px;top:977.58px;width:2021px;height:48.17px;background:#f9fafc;overflow:hidden">
<div class="a" style="left:0;top:0;width:2021px;height:1.5px;background:#e4e5e7"></div>
<div class="a" style="left:0;top:1.5px;width:96px;height:47px;background:#f6f6f6"></div>
<div class="a" style="left:17px;top:207px;"></div>
<div class="a" style="left:17px;top:14px;width:21.5px;height:21px;border:2px solid #7a7a7a;border-radius:3px;background:transparent"></div>
<div class="t" style="left:111px;top:15.5px;font-size:16.5px;color:#2389b0">corrupted_document...</div>
<div class="t" style="left:396px;top:15px;font-size:17px;color:#646464">1</div>
<div class="a" style="left:456px;top:13px;width:147px;height:23px;background:#f7a23b;border-radius:4px"></div>
<div class="t" style="left:456px;width:147px;text-align:center;top:17px;font-size:14px;font-weight:400;color:#fff;-webkit-text-stroke:0.4px #fff;letter-spacing:0.2px">Ready for validation</div>
<div class="t" style="left:647px;top:15px;font-size:16.75px;color:#646464">20.08.2025 10:49:28</div>
<div class="t" style="left:845px;top:15px;font-size:17px;color:#646464">-</div>
<div class="t" style="left:992px;top:15px;font-size:17px;color:#646464">Invoice</div>
<div class="t" style="left:1119px;top:15px;font-size:17px;color:#646464">Test Polydocs</div>
<div class="t" style="left:1305px;top:15px;font-size:17px;color:#646464">-</div>
<div class="t" style="left:1486px;top:15px;font-size:16.75px;color:#646464">20.08.2025 10:49:46</div>
<div class="t" style="left:1683px;top:15px;font-size:17px;color:#646464">-</div>
<div class="t" style="left:1861px;top:15px;font-size:17px;color:#646464">Test Polydocs</div>
</div>
<div class="a" style="left:95px;top:1025.75px;width:2021px;height:31.25px;background:#ffffff;overflow:hidden">
<div class="a" style="left:0;top:0;width:2021px;height:1.5px;background:#e4e5e7"></div>
<div class="a" style="left:0;top:1.5px;width:96px;height:47px;background:#f6f6f6"></div>
<div class="a" style="left:17px;top:207px;"></div>
<div class="a" style="left:17px;top:14px;width:21.5px;height:21px;border:2px solid #7a7a7a;border-radius:3px;background:transparent"></div>
<div class="t" style="left:111px;top:15.5px;font-size:16.5px;color:#2389b0">handle_corrupted_file...</div>
<div class="t" style="left:396px;top:15px;font-size:17px;color:#646464">1</div>
<div class="a" style="left:456px;top:13px;width:147px;height:23px;background:#f7a23b;border-radius:4px"></div>
<div class="t" style="left:456px;width:147px;text-align:center;top:17px;font-size:14px;font-weight:400;color:#fff;-webkit-text-stroke:0.4px #fff;letter-spacing:0.2px">Ready for validation</div>
<div class="t" style="left:647px;top:15px;font-size:16.75px;color:#646464">20.08.2025 10:49:09</div>
<div class="t" style="left:845px;top:15px;font-size:17px;color:#646464">-</div>
<div class="t" style="left:992px;top:15px;font-size:17px;color:#646464">Invoice</div>
<div class="t" style="left:1119px;top:15px;font-size:17px;color:#646464">Test Polydocs</div>
<div class="t" style="left:1305px;top:15px;font-size:17px;color:#646464">-</div>
<div class="t" style="left:1486px;top:15px;font-size:16.75px;color:#646464">20.08.2025 10:49:27</div>
<div class="t" style="left:1683px;top:15px;font-size:17px;color:#646464">-</div>
<div class="t" style="left:1861px;top:15px;font-size:17px;color:#646464">Test Polydocs</div>
</div>
<div class="a" style="left:2116px;top:236px;width:164px;height:821px;background:#f6f6f6;overflow:hidden">
<svg class="a" style="left:0;top:0;width:200px;height:900px;overflow:visible"><polygon points="71.10,-16.14 71.71,-16.03 72.29,-15.73 72.82,-15.30 73.31,-14.86 73.79,-14.48 74.28,-14.24 74.82,-14.14 75.43,-14.17 76.09,-14.24 76.77,-14.27 77.42,-14.17 77.98,-13.91 78.40,-13.46 78.69,-12.87 78.88,-12.22 79.01,-11.57 79.18,-10.98 79.43,-10.49 79.82,-10.10 80.32,-9.77 80.90,-9.43 81.47,-9.06 81.94,-8.60 82.23,-8.06 82.31,-7.44 82.20,-6.80 81.96,-6.16 81.69,-5.55 81.48,-4.98 81.40,-4.44 81.48,-3.90 81.69,-3.33 81.96,-2.72 82.20,-2.08 82.31,-1.44 82.23,-0.82 81.94,-0.28 81.47,0.18 80.90,0.55 80.32,0.88 79.82,1.22 79.43,1.61 79.18,2.10 79.01,2.69 78.88,3.34 78.69,3.99 78.40,4.58 77.98,5.03 77.42,5.29 76.77,5.39 76.09,5.36 75.43,5.29 74.82,5.26 74.28,5.36 73.79,5.60 73.31,5.98 72.82,6.42 72.29,6.85 71.71,7.15 71.10,7.26 70.49,7.15 69.91,6.85 69.38,6.42 68.89,5.98 68.41,5.60 67.92,5.36 67.38,5.26 66.77,5.29 66.11,5.36 65.42,5.39 64.78,5.29 64.22,5.03 63.80,4.58 63.51,3.99 63.32,3.34 63.19,2.69 63.02,2.10 62.77,1.61 62.38,1.22 61.88,0.89 61.30,0.55 60.73,0.18 60.26,-0.28 59.97,-0.82 59.89,-1.44 60.00,-2.08 60.24,-2.72 60.51,-3.33 60.72,-3.90 60.80,-4.44 60.72,-4.98 60.51,-5.55 60.24,-6.16 60.00,-6.80 59.89,-7.44 59.97,-8.06 60.26,-8.60 60.73,-9.06 61.30,-9.43 61.88,-9.77 62.38,-10.10 62.77,-10.49 63.02,-10.98 63.19,-11.57 63.32,-12.22 63.51,-12.87 63.80,-13.46 64.22,-13.91 64.78,-14.17 65.42,-14.27 66.11,-14.24 66.77,-14.17 67.38,-14.14 67.92,-14.24 68.41,-14.48 68.89,-14.86 69.38,-15.30 69.91,-15.73 70.49,-16.03" fill="#6b6b6b"/><path d="M65.10 -5.64 L70.40 -0.14 L77.70 -8.04" stroke="#fff" stroke-width="2.7" fill="none" stroke-linecap="round"/></svg>
<div class="a" style="left:93.90px;top:-6.39px;width:4.9px;height:4.9px;border-radius:2.45px;background:#6b6b6b"></div>
<div class="a" style="left:101.15px;top:-6.39px;width:4.9px;height:4.9px;border-radius:2.45px;background:#6b6b6b"></div>
<div class="a" style="left:108.40px;top:-6.39px;width:4.9px;height:4.9px;border-radius:2.45px;background:#6b6b6b"></div>
<div class="a" style="left:0;top:19.03px;width:164px;height:1.2px;background:#dcdcdc"></div>
<svg class="a" style="left:0;top:0;width:200px;height:900px;overflow:visible"><polygon points="71.10,32.03 71.71,32.14 72.29,32.44 72.82,32.87 73.31,33.31 73.79,33.69 74.28,33.93 74.82,34.03 75.43,34.00 76.09,33.93 76.77,33.90 77.42,34.00 77.98,34.26 78.40,34.71 78.69,35.30 78.88,35.95 79.01,36.60 79.18,37.19 79.43,37.68 79.82,38.07 80.32,38.40 80.90,38.74 81.47,39.11 81.94,39.57 82.23,40.11 82.31,40.73 82.20,41.37 81.96,42.01 81.69,42.62 81.48,43.19 81.40,43.73 81.48,44.27 81.69,44.84 81.96,45.45 82.20,46.09 82.31,46.73 82.23,47.35 81.94,47.89 81.47,48.35 80.90,48.72 80.32,49.05 79.82,49.39 79.43,49.78 79.18,50.27 79.01,50.86 78.88,51.51 78.69,52.16 78.40,52.75 77.98,53.20 77.42,53.46 76.77,53.56 76.09,53.53 75.43,53.46 74.82,53.43 74.28,53.53 73.79,53.77 73.31,54.15 72.82,54.59 72.29,55.02 71.71,55.32 71.10,55.43 70.49,55.32 69.91,55.02 69.38,54.59 68.89,54.15 68.41,53.77 67.92,53.53 67.38,53.43 66.77,53.46 66.11,53.53 65.42,53.56 64.78,53.46 64.22,53.20 63.80,52.75 63.51,52.16 63.32,51.51 63.19,50.86 63.02,50.27 62.77,49.78 62.38,49.39 61.88,49.05 61.30,48.72 60.73,48.35 60.26,47.89 59.97,47.35 59.89,46.73 60.00,46.09 60.24,45.45 60.51,44.84 60.72,44.27 60.80,43.73 60.72,43.19 60.51,42.62 60.24,42.01 60.00,41.37 59.89,40.73 59.97,40.11 60.26,39.57 60.73,39.11 61.30,38.74 61.88,38.40 62.38,38.07 62.77,37.68 63.02,37.19 63.19,36.60 63.32,35.95 63.51,35.30 63.80,34.71 64.22,34.26 64.78,34.00 65.42,33.90 66.11,33.93 66.77,34.00 67.38,34.03 67.92,33.93 68.41,33.69 68.89,33.31 69.38,32.87 69.91,32.44 70.49,32.14" fill="#6b6b6b"/><path d="M65.10 42.53 L70.40 48.03 L77.70 40.13" stroke="#fff" stroke-width="2.7" fill="none" stroke-linecap="round"/></svg>
<div class="a" style="left:93.90px;top:41.78px;width:4.9px;height:4.9px;border-radius:2.45px;background:#6b6b6b"></div>
<div class="a" style="left:101.15px;top:41.78px;width:4.9px;height:4.9px;border-radius:2.45px;background:#6b6b6b"></div>
<div class="a" style="left:108.40px;top:41.78px;width:4.9px;height:4.9px;border-radius:2.45px;background:#6b6b6b"></div>
<div class="a" style="left:0;top:67.2px;width:164px;height:1.2px;background:#dcdcdc"></div>
<svg class="a" style="left:0;top:0;width:200px;height:900px;overflow:visible"><polygon points="71.10,80.20 71.71,80.31 72.29,80.61 72.82,81.04 73.31,81.48 73.79,81.86 74.28,82.10 74.82,82.20 75.43,82.17 76.09,82.10 76.77,82.07 77.42,82.17 77.98,82.43 78.40,82.88 78.69,83.47 78.88,84.12 79.01,84.77 79.18,85.36 79.43,85.85 79.82,86.24 80.32,86.58 80.90,86.91 81.47,87.28 81.94,87.74 82.23,88.28 82.31,88.90 82.20,89.54 81.96,90.18 81.69,90.79 81.48,91.36 81.40,91.90 81.48,92.44 81.69,93.01 81.96,93.62 82.20,94.26 82.31,94.90 82.23,95.52 81.94,96.06 81.47,96.52 80.90,96.89 80.32,97.23 79.82,97.56 79.43,97.95 79.18,98.44 79.01,99.03 78.88,99.68 78.69,100.33 78.40,100.92 77.98,101.37 77.42,101.63 76.77,101.73 76.09,101.70 75.43,101.63 74.82,101.60 74.28,101.70 73.79,101.94 73.31,102.32 72.82,102.76 72.29,103.19 71.71,103.49 71.10,103.60 70.49,103.49 69.91,103.19 69.38,102.76 68.89,102.32 68.41,101.94 67.92,101.70 67.38,101.60 66.77,101.63 66.11,101.70 65.42,101.73 64.78,101.63 64.22,101.37 63.80,100.92 63.51,100.33 63.32,99.68 63.19,99.03 63.02,98.44 62.77,97.95 62.38,97.56 61.88,97.23 61.30,96.89 60.73,96.52 60.26,96.06 59.97,95.52 59.89,94.90 60.00,94.26 60.24,93.62 60.51,93.01 60.72,92.44 60.80,91.90 60.72,91.36 60.51,90.79 60.24,90.18 60.00,89.54 59.89,88.90 59.97,88.28 60.26,87.74 60.73,87.28 61.30,86.91 61.88,86.58 62.38,86.24 62.77,85.85 63.02,85.36 63.19,84.77 63.32,84.12 63.51,83.47 63.80,82.88 64.22,82.43 64.78,82.17 65.42,82.07 66.11,82.10 66.77,82.17 67.38,82.20 67.92,82.10 68.41,81.86 68.89,81.48 69.38,81.04 69.91,80.61 70.49,80.31" fill="#6b6b6b"/><path d="M65.10 90.70 L70.40 96.20 L77.70 88.30" stroke="#fff" stroke-width="2.7" fill="none" stroke-linecap="round"/></svg>
<div class="a" style="left:93.90px;top:89.95px;width:4.9px;height:4.9px;border-radius:2.45px;background:#6b6b6b"></div>
<div class="a" style="left:101.15px;top:89.95px;width:4.9px;height:4.9px;border-radius:2.45px;background:#6b6b6b"></div>
<div class="a" style="left:108.40px;top:89.95px;width:4.9px;height:4.9px;border-radius:2.45px;background:#6b6b6b"></div>
<div class="a" style="left:0;top:115.37px;width:164px;height:1.2px;background:#dcdcdc"></div>
<svg class="a" style="left:0;top:0;width:200px;height:900px;overflow:visible"><polygon points="71.10,128.37 71.71,128.48 72.29,128.78 72.82,129.21 73.31,129.65 73.79,130.03 74.28,130.27 74.82,130.37 75.43,130.34 76.09,130.27 76.77,130.24 77.42,130.34 77.98,130.60 78.40,131.05 78.69,131.64 78.88,132.29 79.01,132.94 79.18,133.53 79.43,134.02 79.82,134.41 80.32,134.75 80.90,135.08 81.47,135.45 81.94,135.91 82.23,136.45 82.31,137.07 82.20,137.71 81.96,138.35 81.69,138.96 81.48,139.53 81.40,140.07 81.48,140.61 81.69,141.18 81.96,141.79 82.20,142.43 82.31,143.07 82.23,143.69 81.94,144.23 81.47,144.69 80.90,145.06 80.32,145.39 79.82,145.73 79.43,146.12 79.18,146.61 79.01,147.20 78.88,147.85 78.69,148.50 78.40,149.09 77.98,149.54 77.42,149.80 76.77,149.90 76.09,149.87 75.43,149.80 74.82,149.77 74.28,149.87 73.79,150.11 73.31,150.49 72.82,150.93 72.29,151.36 71.71,151.66 71.10,151.77 70.49,151.66 69.91,151.36 69.38,150.93 68.89,150.49 68.41,150.11 67.92,149.87 67.38,149.77 66.77,149.80 66.11,149.87 65.42,149.90 64.78,149.80 64.22,149.54 63.80,149.09 63.51,148.50 63.32,147.85 63.19,147.20 63.02,146.61 62.77,146.12 62.38,145.73 61.88,145.39 61.30,145.06 60.73,144.69 60.26,144.23 59.97,143.69 59.89,143.07 60.00,142.43 60.24,141.79 60.51,141.18 60.72,140.61 60.80,140.07 60.72,139.53 60.51,138.96 60.24,138.35 60.00,137.71 59.89,137.07 59.97,136.45 60.26,135.91 60.73,135.45 61.30,135.08 61.88,134.75 62.38,134.41 62.77,134.02 63.02,133.53 63.19,132.94 63.32,132.29 63.51,131.64 63.80,131.05 64.22,130.60 64.78,130.34 65.42,130.24 66.11,130.27 66.77,130.34 67.38,130.37 67.92,130.27 68.41,130.03 68.89,129.65 69.38,129.21 69.91,128.78 70.49,128.48" fill="#6b6b6b"/><path d="M65.10 138.87 L70.40 144.37 L77.70 136.47" stroke="#fff" stroke-width="2.7" fill="none" stroke-linecap="round"/></svg>
<div class="a" style="left:93.90px;top:138.12px;width:4.9px;height:4.9px;border-radius:2.45px;background:#6b6b6b"></div>
<div class="a" style="left:101.15px;top:138.12px;width:4.9px;height:4.9px;border-radius:2.45px;background:#6b6b6b"></div>
<div class="a" style="left:108.40px;top:138.12px;width:4.9px;height:4.9px;border-radius:2.45px;background:#6b6b6b"></div>
<div class="a" style="left:0;top:163.54px;width:164px;height:1.2px;background:#dcdcdc"></div>
<svg class="a" style="left:0;top:0;width:200px;height:900px;overflow:visible"><polygon points="71.10,176.54 71.71,176.65 72.29,176.95 72.82,177.38 73.31,177.82 73.79,178.20 74.28,178.44 74.82,178.54 75.43,178.51 76.09,178.44 76.77,178.41 77.42,178.51 77.98,178.77 78.40,179.22 78.69,179.81 78.88,180.46 79.01,181.11 79.18,181.70 79.43,182.19 79.82,182.58 80.32,182.92 80.90,183.25 81.47,183.62 81.94,184.08 82.23,184.62 82.31,185.24 82.20,185.88 81.96,186.52 81.69,187.13 81.48,187.70 81.40,188.24 81.48,188.78 81.69,189.35 81.96,189.96 82.20,190.60 82.31,191.24 82.23,191.86 81.94,192.40 81.47,192.86 80.90,193.23 80.32,193.56 79.82,193.90 79.43,194.29 79.18,194.78 79.01,195.37 78.88,196.02 78.69,196.67 78.40,197.26 77.98,197.71 77.42,197.97 76.77,198.07 76.09,198.04 75.43,197.97 74.82,197.94 74.28,198.04 73.79,198.28 73.31,198.66 72.82,199.10 72.29,199.53 71.71,199.83 71.10,199.94 70.49,199.83 69.91,199.53 69.38,199.10 68.89,198.66 68.41,198.28 67.92,198.04 67.38,197.94 66.77,197.97 66.11,198.04 65.42,198.07 64.78,197.97 64.22,197.71 63.80,197.26 63.51,196.67 63.32,196.02 63.19,195.37 63.02,194.78 62.77,194.29 62.38,193.90 61.88,193.56 61.30,193.23 60.73,192.86 60.26,192.40 59.97,191.86 59.89,191.24 60.00,190.60 60.24,189.96 60.51,189.35 60.72,188.78 60.80,188.24 60.72,187.70 60.51,187.13 60.24,186.52 60.00,185.88 59.89,185.24 59.97,184.62 60.26,184.08 60.73,183.62 61.30,183.25 61.88,182.92 62.38,182.58 62.77,182.19 63.02,181.70 63.19,181.11 63.32,180.46 63.51,179.81 63.80,179.22 64.22,178.77 64.78,178.51 65.42,178.41 66.11,178.44 66.77,178.51 67.38,178.54 67.92,178.44 68.41,178.20 68.89,177.82 69.38,177.38 69.91,176.95 70.49,176.65" fill="#6b6b6b"/><path d="M65.10 187.04 L70.40 192.54 L77.70 184.64" stroke="#fff" stroke-width="2.7" fill="none" stroke-linecap="round"/></svg>
<div class="a" style="left:93.90px;top:186.29px;width:4.9px;height:4.9px;border-radius:2.45px;background:#6b6b6b"></div>
<div class="a" style="left:101.15px;top:186.29px;width:4.9px;height:4.9px;border-radius:2.45px;background:#6b6b6b"></div>
<div class="a" style="left:108.40px;top:186.29px;width:4.9px;height:4.9px;border-radius:2.45px;background:#6b6b6b"></div>
<div class="a" style="left:0;top:211.71px;width:164px;height:1.2px;background:#dcdcdc"></div>
<svg class="a" style="left:0;top:0;width:200px;height:900px;overflow:visible"><polygon points="71.10,224.71 71.71,224.82 72.29,225.12 72.82,225.55 73.31,225.99 73.79,226.37 74.28,226.61 74.82,226.71 75.43,226.68 76.09,226.61 76.77,226.58 77.42,226.68 77.98,226.94 78.40,227.39 78.69,227.98 78.88,228.63 79.01,229.28 79.18,229.87 79.43,230.36 79.82,230.75 80.32,231.09 80.90,231.42 81.47,231.79 81.94,232.25 82.23,232.79 82.31,233.41 82.20,234.05 81.96,234.69 81.69,235.30 81.48,235.87 81.40,236.41 81.48,236.95 81.69,237.52 81.96,238.13 82.20,238.77 82.31,239.41 82.23,240.03 81.94,240.57 81.47,241.03 80.90,241.40 80.32,241.73 79.82,242.07 79.43,242.46 79.18,242.95 79.01,243.54 78.88,244.19 78.69,244.84 78.40,245.43 77.98,245.88 77.42,246.14 76.77,246.24 76.09,246.21 75.43,246.14 74.82,246.11 74.28,246.21 73.79,246.45 73.31,246.83 72.82,247.27 72.29,247.70 71.71,248.00 71.10,248.11 70.49,248.00 69.91,247.70 69.38,247.27 68.89,246.83 68.41,246.45 67.92,246.21 67.38,246.11 66.77,246.14 66.11,246.21 65.42,246.24 64.78,246.14 64.22,245.88 63.80,245.43 63.51,244.84 63.32,244.19 63.19,243.54 63.02,242.95 62.77,242.46 62.38,242.07 61.88,241.74 61.30,241.40 60.73,241.03 60.26,240.57 59.97,240.03 59.89,239.41 60.00,238.77 60.24,238.13 60.51,237.52 60.72,236.95 60.80,236.41 60.72,235.87 60.51,235.30 60.24,234.69 60.00,234.05 59.89,233.41 59.97,232.79 60.26,232.25 60.73,231.79 61.30,231.42 61.88,231.09 62.38,230.75 62.77,230.36 63.02,229.87 63.19,229.28 63.32,228.63 63.51,227.98 63.80,227.39 64.22,226.94 64.78,226.68 65.42,226.58 66.11,226.61 66.77,226.68 67.38,226.71 67.92,226.61 68.41,226.37 68.89,225.99 69.38,225.55 69.91,225.12 70.49,224.82" fill="#6b6b6b"/><path d="M65.10 235.21 L70.40 240.71 L77.70 232.81" stroke="#fff" stroke-width="2.7" fill="none" stroke-linecap="round"/></svg>
<div class="a" style="left:93.90px;top:234.46px;width:4.9px;height:4.9px;border-radius:2.45px;background:#6b6b6b"></div>
<div class="a" style="left:101.15px;top:234.46px;width:4.9px;height:4.9px;border-radius:2.45px;background:#6b6b6b"></div>
<div class="a" style="left:108.40px;top:234.46px;width:4.9px;height:4.9px;border-radius:2.45px;background:#6b6b6b"></div>
<div class="a" style="left:0;top:259.88px;width:164px;height:1.2px;background:#dcdcdc"></div>
<svg class="a" style="left:0;top:0;width:200px;height:900px;overflow:visible"><polygon points="71.10,272.88 71.71,272.99 72.29,273.29 72.82,273.72 73.31,274.16 73.79,274.54 74.28,274.78 74.82,274.88 75.43,274.85 76.09,274.78 76.77,274.75 77.42,274.85 77.98,275.11 78.40,275.56 78.69,276.15 78.88,276.80 79.01,277.45 79.18,278.04 79.43,278.53 79.82,278.92 80.32,279.25 80.90,279.59 81.47,279.96 81.94,280.42 82.23,280.96 82.31,281.58 82.20,282.22 81.96,282.86 81.69,283.47 81.48,284.04 81.40,284.58 81.48,285.12 81.69,285.69 81.96,286.30 82.20,286.94 82.31,287.58 82.23,288.20 81.94,288.74 81.47,289.20 80.90,289.57 80.32,289.90 79.82,290.24 79.43,290.63 79.18,291.12 79.01,291.71 78.88,292.36 78.69,293.01 78.40,293.60 77.98,294.05 77.42,294.31 76.77,294.41 76.09,294.38 75.43,294.31 74.82,294.28 74.28,294.38 73.79,294.62 73.31,295.00 72.82,295.44 72.29,295.87 71.71,296.17 71.10,296.28 70.49,296.17 69.91,295.87 69.38,295.44 68.89,295.00 68.41,294.62 67.92,294.38 67.38,294.28 66.77,294.31 66.11,294.38 65.42,294.41 64.78,294.31 64.22,294.05 63.80,293.60 63.51,293.01 63.32,292.36 63.19,291.71 63.02,291.12 62.77,290.63 62.38,290.24 61.88,289.90 61.30,289.57 60.73,289.20 60.26,288.74 59.97,288.20 59.89,287.58 60.00,286.94 60.24,286.30 60.51,285.69 60.72,285.12 60.80,284.58 60.72,284.04 60.51,283.47 60.24,282.86 60.00,282.22 59.89,281.58 59.97,280.96 60.26,280.42 60.73,279.96 61.30,279.59 61.88,279.25 62.38,278.92 62.77,278.53 63.02,278.04 63.19,277.45 63.32,276.80 63.51,276.15 63.80,275.56 64.22,275.11 64.78,274.85 65.42,274.75 66.11,274.78 66.77,274.85 67.38,274.88 67.92,274.78 68.41,274.54 68.89,274.16 69.38,273.72 69.91,273.29 70.49,272.99" fill="#6b6b6b"/><path d="M65.10 283.38 L70.40 288.88 L77.70 280.98" stroke="#fff" stroke-width="2.7" fill="none" stroke-linecap="round"/></svg>
<div class="a" style="left:93.90px;top:282.63px;width:4.9px;height:4.9px;border-radius:2.45px;background:#6b6b6b"></div>
<div class="a" style="left:101.15px;top:282.63px;width:4.9px;height:4.9px;border-radius:2.45px;background:#6b6b6b"></div>
<div class="a" style="left:108.40px;top:282.63px;width:4.9px;height:4.9px;border-radius:2.45px;background:#6b6b6b"></div>
<div class="a" style="left:0;top:308.05px;width:164px;height:1.2px;background:#dcdcdc"></div>
<svg class="a" style="left:0;top:0;width:200px;height:900px;overflow:visible"><polygon points="71.10,321.05 71.71,321.16 72.29,321.46 72.82,321.89 73.31,322.33 73.79,322.71 74.28,322.95 74.82,323.05 75.43,323.02 76.09,322.95 76.77,322.92 77.42,323.02 77.98,323.28 78.40,323.73 78.69,324.32 78.88,324.97 79.01,325.62 79.18,326.21 79.43,326.70 79.82,327.09 80.32,327.43 80.90,327.76 81.47,328.13 81.94,328.59 82.23,329.13 82.31,329.75 82.20,330.39 81.96,331.03 81.69,331.64 81.48,332.21 81.40,332.75 81.48,333.29 81.69,333.86 81.96,334.47 82.20,335.11 82.31,335.75 82.23,336.37 81.94,336.91 81.47,337.37 80.90,337.74 80.32,338.07 79.82,338.41 79.43,338.80 79.18,339.29 79.01,339.88 78.88,340.53 78.69,341.18 78.40,341.77 77.98,342.22 77.42,342.48 76.77,342.58 76.09,342.55 75.43,342.48 74.82,342.45 74.28,342.55 73.79,342.79 73.31,343.17 72.82,343.61 72.29,344.04 71.71,344.34 71.10,344.45 70.49,344.34 69.91,344.04 69.38,343.61 68.89,343.17 68.41,342.79 67.92,342.55 67.38,342.45 66.77,342.48 66.11,342.55 65.42,342.58 64.78,342.48 64.22,342.22 63.80,341.77 63.51,341.18 63.32,340.53 63.19,339.88 63.02,339.29 62.77,338.80 62.38,338.41 61.88,338.07 61.30,337.74 60.73,337.37 60.26,336.91 59.97,336.37 59.89,335.75 60.00,335.11 60.24,334.47 60.51,333.86 60.72,333.29 60.80,332.75 60.72,332.21 60.51,331.64 60.24,331.03 60.00,330.39 59.89,329.75 59.97,329.13 60.26,328.59 60.73,328.13 61.30,327.76 61.88,327.43 62.38,327.09 62.77,326.70 63.02,326.21 63.19,325.62 63.32,324.97 63.51,324.32 63.80,323.73 64.22,323.28 64.78,323.02 65.42,322.92 66.11,322.95 66.77,323.02 67.38,323.05 67.92,322.95 68.41,322.71 68.89,322.33 69.38,321.89 69.91,321.46 70.49,321.16" fill="#6b6b6b"/><path d="M65.10 331.55 L70.40 337.05 L77.70 329.15" stroke="#fff" stroke-width="2.7" fill="none" stroke-linecap="round"/></svg>
<div class="a" style="left:93.90px;top:330.80px;width:4.9px;height:4.9px;border-radius:2.45px;background:#6b6b6b"></div>
<div class="a" style="left:101.15px;top:330.80px;width:4.9px;height:4.9px;border-radius:2.45px;background:#6b6b6b"></div>
<div class="a" style="left:108.40px;top:330.80px;width:4.9px;height:4.9px;border-radius:2.45px;background:#6b6b6b"></div>
<div class="a" style="left:0;top:356.22px;width:164px;height:1.2px;background:#dcdcdc"></div>
<svg class="a" style="left:0;top:0;width:200px;height:900px;overflow:visible"><polygon points="71.10,369.22 71.71,369.33 72.29,369.63 72.82,370.06 73.31,370.50 73.79,370.88 74.28,371.12 74.82,371.22 75.43,371.19 76.09,371.12 76.77,371.09 77.42,371.19 77.98,371.45 78.40,371.90 78.69,372.49 78.88,373.14 79.01,373.79 79.18,374.38 79.43,374.87 79.82,375.26 80.32,375.59 80.90,375.93 81.47,376.30 81.94,376.76 82.23,377.30 82.31,377.92 82.20,378.56 81.96,379.20 81.69,379.81 81.48,380.38 81.40,380.92 81.48,381.46 81.69,382.03 81.96,382.64 82.20,383.28 82.31,383.92 82.23,384.54 81.94,385.08 81.47,385.54 80.90,385.91 80.32,386.24 79.82,386.58 79.43,386.97 79.18,387.46 79.01,388.05 78.88,388.70 78.69,389.35 78.40,389.94 77.98,390.39 77.42,390.65 76.77,390.75 76.09,390.72 75.43,390.65 74.82,390.62 74.28,390.72 73.79,390.96 73.31,391.34 72.82,391.78 72.29,392.21 71.71,392.51 71.10,392.62 70.49,392.51 69.91,392.21 69.38,391.78 68.89,391.34 68.41,390.96 67.92,390.72 67.38,390.62 66.77,390.65 66.11,390.72 65.42,390.75 64.78,390.65 64.22,390.39 63.80,389.94 63.51,389.35 63.32,388.70 63.19,388.05 63.02,387.46 62.77,386.97 62.38,386.58 61.88,386.24 61.30,385.91 60.73,385.54 60.26,385.08 59.97,384.54 59.89,383.92 60.00,383.28 60.24,382.64 60.51,382.03 60.72,381.46 60.80,380.92 60.72,380.38 60.51,379.81 60.24,379.20 60.00,378.56 59.89,377.92 59.97,377.30 60.26,376.76 60.73,376.30 61.30,375.93 61.88,375.59 62.38,375.26 62.77,374.87 63.02,374.38 63.19,373.79 63.32,373.14 63.51,372.49 63.80,371.90 64.22,371.45 64.78,371.19 65.42,371.09 66.11,371.12 66.77,371.19 67.38,371.22 67.92,371.12 68.41,370.88 68.89,370.50 69.38,370.06 69.91,369.63 70.49,369.33" fill="#6b6b6b"/><path d="M65.10 379.72 L70.40 385.22 L77.70 377.32" stroke="#fff" stroke-width="2.7" fill="none" stroke-linecap="round"/></svg>
<div class="a" style="left:93.90px;top:378.97px;width:4.9px;height:4.9px;border-radius:2.45px;background:#6b6b6b"></div>
<div class="a" style="left:101.15px;top:378.97px;width:4.9px;height:4.9px;border-radius:2.45px;background:#6b6b6b"></div>
<div class="a" style="left:108.40px;top:378.97px;width:4.9px;height:4.9px;border-radius:2.45px;background:#6b6b6b"></div>
<div class="a" style="left:0;top:404.39px;width:164px;height:1.2px;background:#dcdcdc"></div>
<svg class="a" style="left:0;top:0;width:200px;height:900px;overflow:visible"><polygon points="71.10,417.39 71.71,417.50 72.29,417.80 72.82,418.23 73.31,418.67 73.79,419.05 74.28,419.29 74.82,419.39 75.43,419.36 76.09,419.29 76.77,419.26 77.42,419.36 77.98,419.62 78.40,420.07 78.69,420.66 78.88,421.31 79.01,421.96 79.18,422.55 79.43,423.04 79.82,423.43 80.32,423.76 80.90,424.10 81.47,424.47 81.94,424.93 82.23,425.47 82.31,426.09 82.20,426.73 81.96,427.37 81.69,427.98 81.48,428.55 81.40,429.09 81.48,429.63 81.69,430.20 81.96,430.81 82.20,431.45 82.31,432.09 82.23,432.71 81.94,433.25 81.47,433.71 80.90,434.08 80.32,434.41 79.82,434.75 79.43,435.14 79.18,435.63 79.01,436.22 78.88,436.87 78.69,437.52 78.40,438.11 77.98,438.56 77.42,438.82 76.77,438.92 76.09,438.89 75.43,438.82 74.82,438.79 74.28,438.89 73.79,439.13 73.31,439.51 72.82,439.95 72.29,440.38 71.71,440.68 71.10,440.79 70.49,440.68 69.91,440.38 69.38,439.95 68.89,439.51 68.41,439.13 67.92,438.89 67.38,438.79 66.77,438.82 66.11,438.89 65.42,438.92 64.78,438.82 64.22,438.56 63.80,438.11 63.51,437.52 63.32,436.87 63.19,436.22 63.02,435.63 62.77,435.14 62.38,434.75 61.88,434.41 61.30,434.08 60.73,433.71 60.26,433.25 59.97,432.71 59.89,432.09 60.00,431.45 60.24,430.81 60.51,430.20 60.72,429.63 60.80,429.09 60.72,428.55 60.51,427.98 60.24,427.37 60.00,426.73 59.89,426.09 59.97,425.47 60.26,424.93 60.73,424.47 61.30,424.10 61.88,423.76 62.38,423.43 62.77,423.04 63.02,422.55 63.19,421.96 63.32,421.31 63.51,420.66 63.80,420.07 64.22,419.62 64.78,419.36 65.42,419.26 66.11,419.29 66.77,419.36 67.38,419.39 67.92,419.29 68.41,419.05 68.89,418.67 69.38,418.23 69.91,417.80 70.49,417.50" fill="#6b6b6b"/><path d="M65.10 427.89 L70.40 433.39 L77.70 425.49" stroke="#fff" stroke-width="2.7" fill="none" stroke-linecap="round"/></svg>
<div class="a" style="left:93.90px;top:427.14px;width:4.9px;height:4.9px;border-radius:2.45px;background:#6b6b6b"></div>
<div class="a" style="left:101.15px;top:427.14px;width:4.9px;height:4.9px;border-radius:2.45px;background:#6b6b6b"></div>
<div class="a" style="left:108.40px;top:427.14px;width:4.9px;height:4.9px;border-radius:2.45px;background:#6b6b6b"></div>
<div class="a" style="left:0;top:452.56px;width:164px;height:1.2px;background:#dcdcdc"></div>
<svg class="a" style="left:0;top:0;width:200px;height:900px;overflow:visible"><polygon points="71.10,465.56 71.71,465.67 72.29,465.97 72.82,466.40 73.31,466.84 73.79,467.22 74.28,467.46 74.82,467.56 75.43,467.53 76.09,467.46 76.77,467.43 77.42,467.53 77.98,467.79 78.40,468.24 78.69,468.83 78.88,469.48 79.01,470.13 79.18,470.72 79.43,471.21 79.82,471.60 80.32,471.94 80.90,472.27 81.47,472.64 81.94,473.10 82.23,473.64 82.31,474.26 82.20,474.90 81.96,475.54 81.69,476.15 81.48,476.72 81.40,477.26 81.48,477.80 81.69,478.37 81.96,478.98 82.20,479.62 82.31,480.26 82.23,480.88 81.94,481.42 81.47,481.88 80.90,482.25 80.32,482.58 79.82,482.92 79.43,483.31 79.18,483.80 79.01,484.39 78.88,485.04 78.69,485.69 78.40,486.28 77.98,486.73 77.42,486.99 76.77,487.09 76.09,487.06 75.43,486.99 74.82,486.96 74.28,487.06 73.79,487.30 73.31,487.68 72.82,488.12 72.29,488.55 71.71,488.85 71.10,488.96 70.49,488.85 69.91,488.55 69.38,488.12 68.89,487.68 68.41,487.30 67.92,487.06 67.38,486.96 66.77,486.99 66.11,487.06 65.42,487.09 64.78,486.99 64.22,486.73 63.80,486.28 63.51,485.69 63.32,485.04 63.19,484.39 63.02,483.80 62.77,483.31 62.38,482.92 61.88,482.58 61.30,482.25 60.73,481.88 60.26,481.42 59.97,480.88 59.89,480.26 60.00,479.62 60.24,478.98 60.51,478.37 60.72,477.80 60.80,477.26 60.72,476.72 60.51,476.15 60.24,475.54 60.00,474.90 59.89,474.26 59.97,473.64 60.26,473.10 60.73,472.64 61.30,472.27 61.88,471.94 62.38,471.60 62.77,471.21 63.02,470.72 63.19,470.13 63.32,469.48 63.51,468.83 63.80,468.24 64.22,467.79 64.78,467.53 65.42,467.43 66.11,467.46 66.77,467.53 67.38,467.56 67.92,467.46 68.41,467.22 68.89,466.84 69.38,466.40 69.91,465.97 70.49,465.67" fill="#6b6b6b"/><path d="M65.10 476.06 L70.40 481.56 L77.70 473.66" stroke="#fff" stroke-width="2.7" fill="none" stroke-linecap="round"/></svg>
<div class="a" style="left:93.90px;top:475.31px;width:4.9px;height:4.9px;border-radius:2.45px;background:#6b6b6b"></div>
<div class="a" style="left:101.15px;top:475.31px;width:4.9px;height:4.9px;border-radius:2.45px;background:#6b6b6b"></div>
<div class="a" style="left:108.40px;top:475.31px;width:4.9px;height:4.9px;border-radius:2.45px;background:#6b6b6b"></div>
<div class="a" style="left:0;top:500.73px;width:164px;height:1.2px;background:#dcdcdc"></div>
<svg class="a" style="left:0;top:0;width:200px;height:900px;overflow:visible"><polygon points="71.10,513.73 71.71,513.84 72.29,514.14 72.82,514.57 73.31,515.01 73.79,515.39 74.28,515.63 74.82,515.73 75.43,515.70 76.09,515.63 76.77,515.60 77.42,515.70 77.98,515.96 78.40,516.41 78.69,517.00 78.88,517.65 79.01,518.30 79.18,518.89 79.43,519.38 79.82,519.77 80.32,520.10 80.90,520.44 81.47,520.81 81.94,521.27 82.23,521.81 82.31,522.43 82.20,523.07 81.96,523.71 81.69,524.32 81.48,524.89 81.40,525.43 81.48,525.97 81.69,526.54 81.96,527.15 82.20,527.79 82.31,528.43 82.23,529.05 81.94,529.59 81.47,530.05 80.90,530.42 80.32,530.75 79.82,531.09 79.43,531.48 79.18,531.97 79.01,532.56 78.88,533.21 78.69,533.86 78.40,534.45 77.98,534.90 77.42,535.16 76.77,535.26 76.09,535.23 75.43,535.16 74.82,535.13 74.28,535.23 73.79,535.47 73.31,535.85 72.82,536.29 72.29,536.72 71.71,537.02 71.10,537.13 70.49,537.02 69.91,536.72 69.38,536.29 68.89,535.85 68.41,535.47 67.92,535.23 67.38,535.13 66.77,535.16 66.11,535.23 65.42,535.26 64.78,535.16 64.22,534.90 63.80,534.45 63.51,533.86 63.32,533.21 63.19,532.56 63.02,531.97 62.77,531.48 62.38,531.09 61.88,530.75 61.30,530.42 60.73,530.05 60.26,529.59 59.97,529.05 59.89,528.43 60.00,527.79 60.24,527.15 60.51,526.54 60.72,525.97 60.80,525.43 60.72,524.89 60.51,524.32 60.24,523.71 60.00,523.07 59.89,522.43 59.97,521.81 60.26,521.27 60.73,520.81 61.30,520.44 61.88,520.10 62.38,519.77 62.77,519.38 63.02,518.89 63.19,518.30 63.32,517.65 63.51,517.00 63.80,516.41 64.22,515.96 64.78,515.70 65.42,515.60 66.11,515.63 66.77,515.70 67.38,515.73 67.92,515.63 68.41,515.39 68.89,515.01 69.38,514.57 69.91,514.14 70.49,513.84" fill="#6b6b6b"/><path d="M65.10 524.23 L70.40 529.73 L77.70 521.83" stroke="#fff" stroke-width="2.7" fill="none" stroke-linecap="round"/></svg>
<div class="a" style="left:93.90px;top:523.48px;width:4.9px;height:4.9px;border-radius:2.45px;background:#6b6b6b"></div>
<div class="a" style="left:101.15px;top:523.48px;width:4.9px;height:4.9px;border-radius:2.45px;background:#6b6b6b"></div>
<div class="a" style="left:108.40px;top:523.48px;width:4.9px;height:4.9px;border-radius:2.45px;background:#6b6b6b"></div>
<div class="a" style="left:0;top:548.9px;width:164px;height:1.2px;background:#dcdcdc"></div>
<svg class="a" style="left:0;top:0;width:200px;height:900px;overflow:visible"><polygon points="71.10,561.90 71.71,562.01 72.29,562.31 72.82,562.74 73.31,563.18 73.79,563.56 74.28,563.80 74.82,563.90 75.43,563.87 76.09,563.80 76.77,563.77 77.42,563.87 77.98,564.13 78.40,564.58 78.69,565.17 78.88,565.82 79.01,566.47 79.18,567.06 79.43,567.55 79.82,567.94 80.32,568.27 80.90,568.61 81.47,568.98 81.94,569.44 82.23,569.98 82.31,570.60 82.20,571.24 81.96,571.88 81.69,572.49 81.48,573.06 81.40,573.60 81.48,574.14 81.69,574.71 81.96,575.32 82.20,575.96 82.31,576.60 82.23,577.22 81.94,577.76 81.47,578.22 80.90,578.59 80.32,578.93 79.82,579.26 79.43,579.65 79.18,580.14 79.01,580.73 78.88,581.38 78.69,582.03 78.40,582.62 77.98,583.07 77.42,583.33 76.77,583.43 76.09,583.40 75.43,583.33 74.82,583.30 74.28,583.40 73.79,583.64 73.31,584.02 72.82,584.46 72.29,584.89 71.71,585.19 71.10,585.30 70.49,585.19 69.91,584.89 69.38,584.46 68.89,584.02 68.41,583.64 67.92,583.40 67.38,583.30 66.77,583.33 66.11,583.40 65.42,583.43 64.78,583.33 64.22,583.07 63.80,582.62 63.51,582.03 63.32,581.38 63.19,580.73 63.02,580.14 62.77,579.65 62.38,579.26 61.88,578.93 61.30,578.59 60.73,578.22 60.26,577.76 59.97,577.22 59.89,576.60 60.00,575.96 60.24,575.32 60.51,574.71 60.72,574.14 60.80,573.60 60.72,573.06 60.51,572.49 60.24,571.88 60.00,571.24 59.89,570.60 59.97,569.98 60.26,569.44 60.73,568.98 61.30,568.61 61.88,568.27 62.38,567.94 62.77,567.55 63.02,567.06 63.19,566.47 63.32,565.82 63.51,565.17 63.80,564.58 64.22,564.13 64.78,563.87 65.42,563.77 66.11,563.80 66.77,563.87 67.38,563.90 67.92,563.80 68.41,563.56 68.89,563.18 69.38,562.74 69.91,562.31 70.49,562.01" fill="#6b6b6b"/><path d="M65.10 572.40 L70.40 577.90 L77.70 570.00" stroke="#fff" stroke-width="2.7" fill="none" stroke-linecap="round"/></svg>
<div class="a" style="left:93.90px;top:571.65px;width:4.9px;height:4.9px;border-radius:2.45px;background:#6b6b6b"></div>
<div class="a" style="left:101.15px;top:571.65px;width:4.9px;height:4.9px;border-radius:2.45px;background:#6b6b6b"></div>
<div class="a" style="left:108.40px;top:571.65px;width:4.9px;height:4.9px;border-radius:2.45px;background:#6b6b6b"></div>
<div class="a" style="left:0;top:597.07px;width:164px;height:1.2px;background:#dcdcdc"></div>
<svg class="a" style="left:0;top:0;width:200px;height:900px;overflow:visible"><polygon points="71.10,610.07 71.71,610.18 72.29,610.48 72.82,610.91 73.31,611.35 73.79,611.73 74.28,611.97 74.82,612.07 75.43,612.04 76.09,611.97 76.77,611.94 77.42,612.04 77.98,612.30 78.40,612.75 78.69,613.34 78.88,613.99 79.01,614.64 79.18,615.23 79.43,615.72 79.82,616.11 80.32,616.44 80.90,616.78 81.47,617.15 81.94,617.61 82.23,618.15 82.31,618.77 82.20,619.41 81.96,620.05 81.69,620.66 81.48,621.23 81.40,621.77 81.48,622.31 81.69,622.88 81.96,623.49 82.20,624.13 82.31,624.77 82.23,625.39 81.94,625.93 81.47,626.39 80.90,626.76 80.32,627.10 79.82,627.43 79.43,627.82 79.18,628.31 79.01,628.90 78.88,629.55 78.69,630.20 78.40,630.79 77.98,631.24 77.42,631.50 76.77,631.60 76.09,631.57 75.43,631.50 74.82,631.47 74.28,631.57 73.79,631.81 73.31,632.19 72.82,632.63 72.29,633.06 71.71,633.36 71.10,633.47 70.49,633.36 69.91,633.06 69.38,632.63 68.89,632.19 68.41,631.81 67.92,631.57 67.38,631.47 66.77,631.50 66.11,631.57 65.42,631.60 64.78,631.50 64.22,631.24 63.80,630.79 63.51,630.20 63.32,629.55 63.19,628.90 63.02,628.31 62.77,627.82 62.38,627.43 61.88,627.10 61.30,626.76 60.73,626.39 60.26,625.93 59.97,625.39 59.89,624.77 60.00,624.13 60.24,623.49 60.51,622.88 60.72,622.31 60.80,621.77 60.72,621.23 60.51,620.66 60.24,620.05 60.00,619.41 59.89,618.77 59.97,618.15 60.26,617.61 60.73,617.15 61.30,616.78 61.88,616.44 62.38,616.11 62.77,615.72 63.02,615.23 63.19,614.64 63.32,613.99 63.51,613.34 63.80,612.75 64.22,612.30 64.78,612.04 65.42,611.94 66.11,611.97 66.77,612.04 67.38,612.07 67.92,611.97 68.41,611.73 68.89,611.35 69.38,610.91 69.91,610.48 70.49,610.18" fill="#6b6b6b"/><path d="M65.10 620.57 L70.40 626.07 L77.70 618.17" stroke="#fff" stroke-width="2.7" fill="none" stroke-linecap="round"/></svg>
<div class="a" style="left:93.90px;top:619.82px;width:4.9px;height:4.9px;border-radius:2.45px;background:#6b6b6b"></div>
<div class="a" style="left:101.15px;top:619.82px;width:4.9px;height:4.9px;border-radius:2.45px;background:#6b6b6b"></div>
<div class="a" style="left:108.40px;top:619.82px;width:4.9px;height:4.9px;border-radius:2.45px;background:#6b6b6b"></div>
<div class="a" style="left:0;top:645.24px;width:164px;height:1.2px;background:#dcdcdc"></div>
<svg class="a" style="left:0;top:0;width:200px;height:900px;overflow:visible"><polygon points="71.10,658.24 71.71,658.35 72.29,658.65 72.82,659.08 73.31,659.52 73.79,659.90 74.28,660.14 74.82,660.24 75.43,660.21 76.09,660.14 76.77,660.11 77.42,660.21 77.98,660.47 78.40,660.92 78.69,661.51 78.88,662.16 79.01,662.81 79.18,663.40 79.43,663.89 79.82,664.28 80.32,664.61 80.90,664.95 81.47,665.32 81.94,665.78 82.23,666.32 82.31,666.94 82.20,667.58 81.96,668.22 81.69,668.83 81.48,669.40 81.40,669.94 81.48,670.48 81.69,671.05 81.96,671.66 82.20,672.30 82.31,672.94 82.23,673.56 81.94,674.10 81.47,674.56 80.90,674.93 80.32,675.26 79.82,675.60 79.43,675.99 79.18,676.48 79.01,677.07 78.88,677.72 78.69,678.37 78.40,678.96 77.98,679.41 77.42,679.67 76.77,679.77 76.09,679.74 75.43,679.67 74.82,679.64 74.28,679.74 73.79,679.98 73.31,680.36 72.82,680.80 72.29,681.23 71.71,681.53 71.10,681.64 70.49,681.53 69.91,681.23 69.38,680.80 68.89,680.36 68.41,679.98 67.92,679.74 67.38,679.64 66.77,679.67 66.11,679.74 65.42,679.77 64.78,679.67 64.22,679.41 63.80,678.96 63.51,678.37 63.32,677.72 63.19,677.07 63.02,676.48 62.77,675.99 62.38,675.60 61.88,675.26 61.30,674.93 60.73,674.56 60.26,674.10 59.97,673.56 59.89,672.94 60.00,672.30 60.24,671.66 60.51,671.05 60.72,670.48 60.80,669.94 60.72,669.40 60.51,668.83 60.24,668.22 60.00,667.58 59.89,666.94 59.97,666.32 60.26,665.78 60.73,665.32 61.30,664.95 61.88,664.61 62.38,664.28 62.77,663.89 63.02,663.40 63.19,662.81 63.32,662.16 63.51,661.51 63.80,660.92 64.22,660.47 64.78,660.21 65.42,660.11 66.11,660.14 66.77,660.21 67.38,660.24 67.92,660.14 68.41,659.90 68.89,659.52 69.38,659.08 69.91,658.65 70.49,658.35" fill="#6b6b6b"/><path d="M65.10 668.74 L70.40 674.24 L77.70 666.34" stroke="#fff" stroke-width="2.7" fill="none" stroke-linecap="round"/></svg>
<div class="a" style="left:93.90px;top:667.99px;width:4.9px;height:4.9px;border-radius:2.45px;background:#6b6b6b"></div>
<div class="a" style="left:101.15px;top:667.99px;width:4.9px;height:4.9px;border-radius:2.45px;background:#6b6b6b"></div>
<div class="a" style="left:108.40px;top:667.99px;width:4.9px;height:4.9px;border-radius:2.45px;background:#6b6b6b"></div>
<div class="a" style="left:0;top:693.41px;width:164px;height:1.2px;background:#dcdcdc"></div>
<svg class="a" style="left:0;top:0;width:200px;height:900px;overflow:visible"><polygon points="71.10,706.41 71.71,706.52 72.29,706.82 72.82,707.25 73.31,707.69 73.79,708.07 74.28,708.31 74.82,708.41 75.43,708.38 76.09,708.31 76.77,708.28 77.42,708.38 77.98,708.64 78.40,709.09 78.69,709.68 78.88,710.33 79.01,710.98 79.18,711.57 79.43,712.06 79.82,712.45 80.32,712.78 80.90,713.12 81.47,713.49 81.94,713.95 82.23,714.49 82.31,715.11 82.20,715.75 81.96,716.39 81.69,717.00 81.48,717.57 81.40,718.11 81.48,718.65 81.69,719.22 81.96,719.83 82.20,720.47 82.31,721.11 82.23,721.73 81.94,722.27 81.47,722.73 80.90,723.10 80.32,723.44 79.82,723.77 79.43,724.16 79.18,724.65 79.01,725.24 78.88,725.89 78.69,726.54 78.40,727.13 77.98,727.58 77.42,727.84 76.77,727.94 76.09,727.91 75.43,727.84 74.82,727.81 74.28,727.91 73.79,728.15 73.31,728.53 72.82,728.97 72.29,729.40 71.71,729.70 71.10,729.81 70.49,729.70 69.91,729.40 69.38,728.97 68.89,728.53 68.41,728.15 67.92,727.91 67.38,727.81 66.77,727.84 66.11,727.91 65.42,727.94 64.78,727.84 64.22,727.58 63.80,727.13 63.51,726.54 63.32,725.89 63.19,725.24 63.02,724.65 62.77,724.16 62.38,723.77 61.88,723.44 61.30,723.10 60.73,722.73 60.26,722.27 59.97,721.73 59.89,721.11 60.00,720.47 60.24,719.83 60.51,719.22 60.72,718.65 60.80,718.11 60.72,717.57 60.51,717.00 60.24,716.39 60.00,715.75 59.89,715.11 59.97,714.49 60.26,713.95 60.73,713.49 61.30,713.12 61.88,712.78 62.38,712.45 62.77,712.06 63.02,711.57 63.19,710.98 63.32,710.33 63.51,709.68 63.80,709.09 64.22,708.64 64.78,708.38 65.42,708.28 66.11,708.31 66.77,708.38 67.38,708.41 67.92,708.31 68.41,708.07 68.89,707.69 69.38,707.25 69.91,706.82 70.49,706.52" fill="#6b6b6b"/><path d="M65.10 716.91 L70.40 722.41 L77.70 714.51" stroke="#fff" stroke-width="2.7" fill="none" stroke-linecap="round"/></svg>
<div class="a" style="left:93.90px;top:716.16px;width:4.9px;height:4.9px;border-radius:2.45px;background:#6b6b6b"></div>
<div class="a" style="left:101.15px;top:716.16px;width:4.9px;height:4.9px;border-radius:2.45px;background:#6b6b6b"></div>
<div class="a" style="left:108.40px;top:716.16px;width:4.9px;height:4.9px;border-radius:2.45px;background:#6b6b6b"></div>
<div class="a" style="left:0;top:741.58px;width:164px;height:1.2px;background:#dcdcdc"></div>
<svg class="a" style="left:0;top:0;width:200px;height:900px;overflow:visible"><polygon points="71.10,754.58 71.71,754.69 72.29,754.99 72.82,755.42 73.31,755.86 73.79,756.24 74.28,756.48 74.82,756.58 75.43,756.55 76.09,756.48 76.77,756.45 77.42,756.55 77.98,756.81 78.40,757.26 78.69,757.85 78.88,758.50 79.01,759.15 79.18,759.74 79.43,760.23 79.82,760.62 80.32,760.95 80.90,761.29 81.47,761.66 81.94,762.12 82.23,762.66 82.31,763.28 82.20,763.92 81.96,764.56 81.69,765.17 81.48,765.74 81.40,766.28 81.48,766.82 81.69,767.39 81.96,768.00 82.20,768.64 82.31,769.28 82.23,769.90 81.94,770.44 81.47,770.90 80.90,771.27 80.32,771.61 79.82,771.94 79.43,772.33 79.18,772.82 79.01,773.41 78.88,774.06 78.69,774.71 78.40,775.30 77.98,775.75 77.42,776.01 76.77,776.11 76.09,776.08 75.43,776.01 74.82,775.98 74.28,776.08 73.79,776.32 73.31,776.70 72.82,777.14 72.29,777.57 71.71,777.87 71.10,777.98 70.49,777.87 69.91,777.57 69.38,777.14 68.89,776.70 68.41,776.32 67.92,776.08 67.38,775.98 66.77,776.01 66.11,776.08 65.42,776.11 64.78,776.01 64.22,775.75 63.80,775.30 63.51,774.71 63.32,774.06 63.19,773.41 63.02,772.82 62.77,772.33 62.38,771.94 61.88,771.61 61.30,771.27 60.73,770.90 60.26,770.44 59.97,769.90 59.89,769.28 60.00,768.64 60.24,768.00 60.51,767.39 60.72,766.82 60.80,766.28 60.72,765.74 60.51,765.17 60.24,764.56 60.00,763.92 59.89,763.28 59.97,762.66 60.26,762.12 60.73,761.66 61.30,761.29 61.88,760.95 62.38,760.62 62.77,760.23 63.02,759.74 63.19,759.15 63.32,758.50 63.51,757.85 63.80,757.26 64.22,756.81 64.78,756.55 65.42,756.45 66.11,756.48 66.77,756.55 67.38,756.58 67.92,756.48 68.41,756.24 68.89,755.86 69.38,755.42 69.91,754.99 70.49,754.69" fill="#6b6b6b"/><path d="M65.10 765.08 L70.40 770.58 L77.70 762.68" stroke="#fff" stroke-width="2.7" fill="none" stroke-linecap="round"/></svg>
<div class="a" style="left:93.90px;top:764.33px;width:4.9px;height:4.9px;border-radius:2.45px;background:#6b6b6b"></div>
<div class="a" style="left:101.15px;top:764.33px;width:4.9px;height:4.9px;border-radius:2.45px;background:#6b6b6b"></div>
<div class="a" style="left:108.40px;top:764.33px;width:4.9px;height:4.9px;border-radius:2.45px;background:#6b6b6b"></div>
<div class="a" style="left:0;top:789.75px;width:164px;height:1.2px;background:#dcdcdc"></div>
<svg class="a" style="left:0;top:0;width:200px;height:900px;overflow:visible"><polygon points="71.10,802.75 71.71,802.86 72.29,803.16 72.82,803.59 73.31,804.03 73.79,804.41 74.28,804.65 74.82,804.75 75.43,804.72 76.09,804.65 76.77,804.62 77.42,804.72 77.98,804.98 78.40,805.43 78.69,806.02 78.88,806.67 79.01,807.32 79.18,807.91 79.43,808.40 79.82,808.79 80.32,809.12 80.90,809.46 81.47,809.83 81.94,810.29 82.23,810.83 82.31,811.45 82.20,812.09 81.96,812.73 81.69,813.34 81.48,813.91 81.40,814.45 81.48,814.99 81.69,815.56 81.96,816.17 82.20,816.81 82.31,817.45 82.23,818.07 81.94,818.61 81.47,819.07 80.90,819.44 80.32,819.77 79.82,820.11 79.43,820.50 79.18,820.99 79.01,821.58 78.88,822.23 78.69,822.88 78.40,823.47 77.98,823.92 77.42,824.18 76.77,824.28 76.09,824.25 75.43,824.18 74.82,824.15 74.28,824.25 73.79,824.49 73.31,824.87 72.82,825.31 72.29,825.74 71.71,826.04 71.10,826.15 70.49,826.04 69.91,825.74 69.38,825.31 68.89,824.87 68.41,824.49 67.92,824.25 67.38,824.15 66.77,824.18 66.11,824.25 65.42,824.28 64.78,824.18 64.22,823.92 63.80,823.47 63.51,822.88 63.32,822.23 63.19,821.58 63.02,820.99 62.77,820.50 62.38,820.11 61.88,819.77 61.30,819.44 60.73,819.07 60.26,818.61 59.97,818.07 59.89,817.45 60.00,816.81 60.24,816.17 60.51,815.56 60.72,814.99 60.80,814.45 60.72,813.91 60.51,813.34 60.24,812.73 60.00,812.09 59.89,811.45 59.97,810.83 60.26,810.29 60.73,809.83 61.30,809.46 61.88,809.12 62.38,808.79 62.77,808.40 63.02,807.91 63.19,807.32 63.32,806.67 63.51,806.02 63.80,805.43 64.22,804.98 64.78,804.72 65.42,804.62 66.11,804.65 66.77,804.72 67.38,804.75 67.92,804.65 68.41,804.41 68.89,804.03 69.38,803.59 69.91,803.16 70.49,802.86" fill="#6b6b6b"/><path d="M65.10 813.25 L70.40 818.75 L77.70 810.85" stroke="#fff" stroke-width="2.7" fill="none" stroke-linecap="round"/></svg>
<div class="a" style="left:93.90px;top:812.50px;width:4.9px;height:4.9px;border-radius:2.45px;background:#6b6b6b"></div>
<div class="a" style="left:101.15px;top:812.50px;width:4.9px;height:4.9px;border-radius:2.45px;background:#6b6b6b"></div>
<div class="a" style="left:108.40px;top:812.50px;width:4.9px;height:4.9px;border-radius:2.45px;background:#6b6b6b"></div>
</div>
<div class="a" style="left:95px;top:1057px;width:2185px;height:57px;background:#fff"></div>
<div class="a" style="left:2040px;top:1057px;width:1px;height:57px;background:#e0e0e0"></div>
<div class="t" style="left:1795px;top:1076px;font-size:16.5px;color:#666">Documents per Page:</div>
<div class="t" style="left:1965px;top:1076px;font-size:17px;color:#222">50</div>
<svg class="a" style="left:1999px;top:1082px;width:12px;height:7px" viewBox="0 0 12 7"><path d="M0 0H12L6 6Z" fill="#666"/></svg>
<svg class="a" style="left:2050px;top:1060px;width:220px;height:50px" viewBox="2050 1060 220 50">
<g fill="none" stroke-width="2.5" stroke-linecap="butt">
<path d="M2070.8 1078 V1093" stroke="#5ba8c6"/><path d="M2084 1079 L2077.3 1085.6 L2084 1092.2" stroke="#5ba8c6"/>
<path d="M2116.6 1079 L2109.9 1085.6 L2116.6 1092.2" stroke="#5ba8c6"/>
<path d="M2203.9 1079 L2210.6 1085.6 L2203.9 1092.2" stroke="#1a7fab"/>
<path d="M2236.4 1079 L2243.1 1085.6 L2236.4 1092.2" stroke="#1a7fab"/><path d="M2249.9 1078 V1093" stroke="#1a7fab"/>
</g></svg>
<div class="t" style="left:2143.5px;top:1076px;font-size:17px;color:#666;word-spacing:1.2px">1 / 5</div>
<div class="a" style="left:105px;top:1140px;width:2165px;height:1px;background:#dcdcdc"></div>
<div class="a" style="left:95px;top:136px;width:542px;height:336px;background:#fff;border-radius:5px;box-shadow:0 2px 5px rgba(0,0,0,0.24)"></div>
<div class="t" style="left:114px;top:180px;font-size:17px;color:#111;letter-spacing:-0.25px">Status</div>
<div class="t" style="left:114px;top:238px;font-size:17px;color:#111;letter-spacing:-0.25px">Assigned To</div>
<div class="t" style="left:114px;top:296px;font-size:17px;color:#111;letter-spacing:-0.25px">Assigned To Group</div>
<div class="t" style="left:114px;top:354px;font-size:17px;color:#111;letter-spacing:-0.25px">Restart Required</div>
<div class="a" style="left:335px;top:165px;width:273px;height:47px;background:#fff;border:1px solid #c8c8c8;border-radius:4px"></div>
<div class="t" style="left:349px;top:178px;font-size:17px;color:#757575">Status</div>
<svg class="a" style="left:572px;top:186px;width:13px;height:7px" viewBox="0 0 13 7"><path d="M0 0H13L6.5 6.5Z" fill="#555"/></svg>
<div class="a" style="left:335px;top:223px;width:273px;height:47px;background:#fff;border:1px solid #c8c8c8;border-radius:4px"></div>
<div class="t" style="left:349px;top:236px;font-size:17px;color:#757575">Assigned To</div>
<svg class="a" style="left:572px;top:244px;width:13px;height:7px" viewBox="0 0 13 7"><path d="M0 0H13L6.5 6.5Z" fill="#555"/></svg>
<div class="a" style="left:335px;top:281px;width:273px;height:47px;background:#fff;border:1px solid #c8c8c8;border-radius:4px"></div>
<div class="t" style="left:349px;top:294px;font-size:17px;color:#757575">Assigned To Group</div>
<svg class="a" style="left:572px;top:302px;width:13px;height:7px" viewBox="0 0 13 7"><path d="M0 0H13L6.5 6.5Z" fill="#555"/></svg>
<div class="a" style="left:336px;top:353px;width:22px;height:22px;border:2px solid #757575;border-radius:3px"></div>
<div class="t" style="left:407px;top:421px;font-size:16.6px;font-weight:400;color:#d7000f;-webkit-text-stroke:0.45px #d7000f">Clear Filters</div>
<div class="a" style="left:527px;top:410px;width:81px;height:43px;background:#2389b0;border-radius:6px"></div>
<div class="t" style="left:527px;width:81px;text-align:center;top:421px;font-size:16.6px;font-weight:400;color:#fff;-webkit-text-stroke:0.45px #fff">Apply</div>
</body></html>
